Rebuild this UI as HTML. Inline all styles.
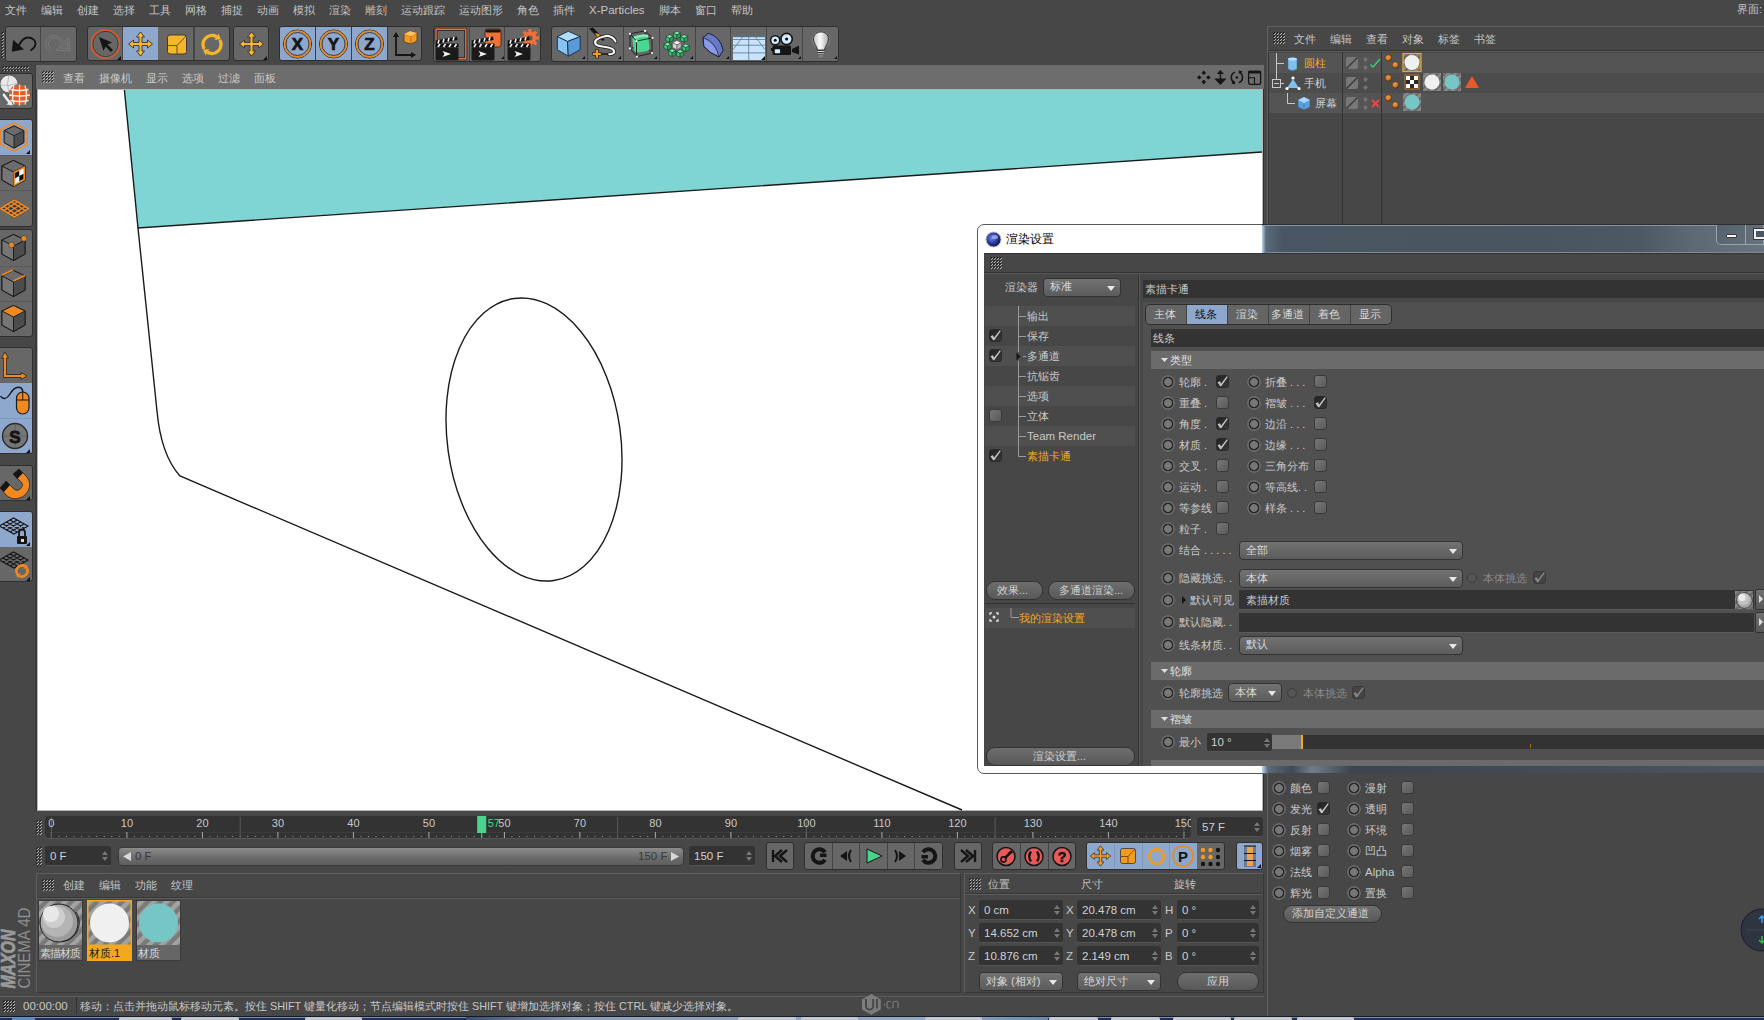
<!DOCTYPE html>
<html><head><meta charset="utf-8">
<style>
*{box-sizing:border-box;margin:0;padding:0}
html,body{width:1764px;height:1020px;overflow:hidden;background:#474747;font-family:"Liberation Sans",sans-serif;font-size:12px;color:#c4c4c4}
.a{position:absolute}
.t{position:absolute;white-space:nowrap;line-height:14px;font-size:11px}
.hatch{position:absolute;background:repeating-linear-gradient(135deg,#d0d0d0 0 1px,transparent 1px 3px);opacity:.55}
.grp{position:absolute;border:1px solid #2f2f2f;border-radius:3px;background:#676767;overflow:hidden}
.bt{position:absolute;top:0;bottom:0;border-right:1px solid #464646}
.sel{background:#8ea7cc}
.radio{position:absolute;width:14px;height:14px;border-radius:50%;background:radial-gradient(circle at 50% 50%,#787878 0,#747474 3.6px,#262626 4.1px,#262626 5px,#5c5c5c 5.4px,#6c6c6c 6px,#6c6c6c 6.6px,rgba(108,108,108,0) 7.1px)}
.cb{position:absolute;width:13px;height:13px;border-radius:3px;background:linear-gradient(135deg,#777,#5a5a5a);border:1px solid #3a3a3a}
.cbk{position:absolute;width:13px;height:13px;border-radius:3px;background:linear-gradient(135deg,#222,#383838);border:1px solid #2a2a2a}
.cbk:after{content:"";position:absolute;left:-1px;top:-1px;width:13px;height:13px;background:#c6c6c6;clip-path:polygon(1.5px 7.2px,4px 6.2px,5px 8.8px,10.8px 1.2px,11.8px 2px,5.2px 11.2px,4.2px 11.2px)}
.dd{position:absolute;border-radius:4px;background:linear-gradient(#727272,#5c5c5c);border:1px solid #333;color:#dcdcdc}
.dd:after{content:"";position:absolute;right:5px;top:50%;margin-top:-2px;border-left:4.5px solid transparent;border-right:4.5px solid transparent;border-top:5px solid #e8e8e8}
.fld{position:absolute;background:#333;border-radius:3px;border-bottom:1px solid #555}
.pbtn{position:absolute;border-radius:9px;background:linear-gradient(#6e6e6e,#585858);border:1px solid #333;color:#d0d0d0;text-align:center}
.dim:after{background:#8a8a8a}
</style></head><body>

<svg width="0" height="0" style="position:absolute"><defs><pattern id="hp" width="3" height="3" patternUnits="userSpaceOnUse"><rect x="0" y="1" width="1" height="1" fill="#1e1e1e"/><rect x="1" y="0" width="1" height="1" fill="#1e1e1e"/><rect x="1" y="2" width="1" height="1" fill="#b4b4b4"/><rect x="2" y="1" width="1" height="1" fill="#b4b4b4"/></pattern></defs></svg>
<!-- ============ MENU BAR ============ -->
<div id="menu">
<span class="t" style="left:5px;top:3px">文件</span>
<span class="t" style="left:41px;top:3px">编辑</span>
<span class="t" style="left:77px;top:3px">创建</span>
<span class="t" style="left:113px;top:3px">选择</span>
<span class="t" style="left:149px;top:3px">工具</span>
<span class="t" style="left:185px;top:3px">网格</span>
<span class="t" style="left:221px;top:3px">捕捉</span>
<span class="t" style="left:257px;top:3px">动画</span>
<span class="t" style="left:293px;top:3px">模拟</span>
<span class="t" style="left:329px;top:3px">渲染</span>
<span class="t" style="left:365px;top:3px">雕刻</span>
<span class="t" style="left:401px;top:3px">运动跟踪</span>
<span class="t" style="left:459px;top:3px">运动图形</span>
<span class="t" style="left:517px;top:3px">角色</span>
<span class="t" style="left:553px;top:3px">插件</span>
<span class="t" style="left:589px;top:3px;font-size:11.5px">X-Particles</span>
<span class="t" style="left:659px;top:3px">脚本</span>
<span class="t" style="left:695px;top:3px">窗口</span>
<span class="t" style="left:731px;top:3px">帮助</span>
<span class="t" style="left:1737px;top:2px">界面:</span>
</div>


<!-- ============ TOP TOOLBAR ============ -->
<svg class="a" style="left:1px;top:32px" width="3" height="26"><rect width="3" height="26" fill="url(#hp)"/></svg>
<div class="grp" style="left:5px;top:26px;width:72px;height:36px">
 <div class="bt" style="left:0;width:35px"></div>
 <svg class="a" style="left:0;top:0" width="70" height="34" viewBox="0 0 70 34">
  <path d="M7.2,12.7 L5.7,24.7 L18,22.5 Z" fill="#151515"/>
  <path d="M12.5,19 C15,14 18,10.5 22,10.5 C26.5,10.5 29.5,13.5 29.5,16.5 C29.5,19 27.5,21.5 24.5,23.5" fill="none" stroke="#151515" stroke-width="1.9"/>
  <g fill="none" stroke="#7c7c7c" stroke-width="0.9"><path d="M43,24 C39,20 38.5,14 43,10.5 C47,7.5 52,8.5 55,11.5 L57,14"/><path d="M45,22.5 C42,19 41.5,15 44.5,12.5 C47.5,10 51,10.5 53.5,13 L55,15"/><path d="M56.5,16 L63,11 L64,24 L50,23 Z"/><path d="M58,18 L61.5,15 L62,21.5 L54,21 Z"/></g>
 </svg>
</div>
<div class="grp" style="left:87px;top:26px;height:36px;width:143px;height:35px">
 <div class="bt sel" style="left:35px;width:35px;border:none"></div>
 <div class="bt" style="left:0;width:35px"></div>
 <div class="bt" style="left:106px;width:1px;left:106px"></div>
 <div class="bt" style="left:70px;width:36px"></div>
 <svg class="a" style="left:0;top:0" width="142" height="34" viewBox="0 0 142 34">
  <circle cx="17.5" cy="17" r="14" fill="none" stroke="#e0582a" stroke-width="1.7"/>
  <circle cx="17.5" cy="17" r="12.7" fill="none" stroke="#333" stroke-width="0.8"/>
  <path d="M11,10 L24,15.5 L19.5,17.5 L25,23 L23,25 L17.5,19.5 L15.5,24 Z" fill="#151515"/>
  <path d="M33,33 L33,29 L29,33 Z" fill="#111"/>
  <g transform="translate(52.5,17)"><path d="M0,-12 L4,-7 L1.5,-7 L1.5,-1.5 L7,-1.5 L7,-4 L12,0 L7,4 L7,1.5 L1.5,1.5 L1.5,7 L4,7 L0,12 L-4,7 L-1.5,7 L-1.5,1.5 L-7,1.5 L-7,4 L-12,0 L-7,-4 L-7,-1.5 L-1.5,-1.5 L-1.5,-7 L-4,-7 Z" fill="#f7b52c" stroke="#333" stroke-width="0.9" stroke-linejoin="round"/></g>
  <rect x="79.5" y="8" width="19" height="19" rx="2.5" fill="#f7b52c" stroke="#333" stroke-width="0.9"/>
  <path d="M80,18.5 L89,18.5 L89,27 M89,18.5 L98,9" fill="none" stroke="#5a4a20" stroke-width="0.9"/>
  <g stroke="#222" stroke-width="0"><path d="M116.21,22.00 A9,9 0 0 1 128.50,9.71" fill="none" stroke="#f7b52c" stroke-width="3.4"/><path d="M132.92,12.26 L130.37,6.47 L126.63,12.94 Z" fill="#f7b52c"/><path d="M131.79,13.00 A9,9 0 0 1 119.50,25.29" fill="none" stroke="#f7b52c" stroke-width="3.4"/><path d="M115.08,22.74 L117.63,28.53 L121.37,22.06 Z" fill="#f7b52c"/></g>
 </svg>
</div>
<div class="grp" style="left:233px;top:26px;height:36px;width:36px;height:35px">
 <svg class="a" style="left:0;top:0" width="35" height="34" viewBox="0 0 35 34">
  <g transform="translate(17.5,17)"><path d="M0,-12 L4,-7 L1.5,-7 L1.5,-1.5 L7,-1.5 L7,-4 L12,0 L7,4 L7,1.5 L1.5,1.5 L1.5,7 L4,7 L0,12 L-4,7 L-1.5,7 L-1.5,1.5 L-7,1.5 L-7,4 L-12,0 L-7,-4 L-7,-1.5 L-1.5,-1.5 L-1.5,-7 L-4,-7 Z" fill="#f7b52c" stroke="#333" stroke-width="0.9" stroke-linejoin="round"/></g>
  <path d="M33,33 L33,29 L29,33 Z" fill="#111"/>
 </svg>
</div>
<div class="grp" style="left:279px;top:26px;height:36px;width:143px;height:35px">
 <div class="bt sel" style="left:0;width:36px;border-right:1px solid #3e3e3e"></div>
 <div class="bt sel" style="left:36px;width:36px;border-right:1px solid #3e3e3e"></div>
 <div class="bt sel" style="left:72px;width:36px;border-right:1px solid #3e3e3e"></div>
 <svg class="a" style="left:0;top:0" width="142" height="34" viewBox="0 0 142 34">
  <g><circle cx="17.5" cy="17" r="14" fill="none" stroke="#222" stroke-width="1"/><circle cx="17.5" cy="17" r="12.8" fill="none" stroke="#e88a20" stroke-width="1.8"/><circle cx="17.5" cy="17" r="11.5" fill="none" stroke="#222" stroke-width="0.8"/><circle cx="53.5" cy="17" r="14" fill="none" stroke="#222" stroke-width="1"/><circle cx="53.5" cy="17" r="12.8" fill="none" stroke="#e88a20" stroke-width="1.8"/><circle cx="53.5" cy="17" r="11.5" fill="none" stroke="#222" stroke-width="0.8"/><circle cx="89.5" cy="17" r="14" fill="none" stroke="#222" stroke-width="1"/><circle cx="89.5" cy="17" r="12.8" fill="none" stroke="#e88a20" stroke-width="1.8"/><circle cx="89.5" cy="17" r="11.5" fill="none" stroke="#222" stroke-width="0.8"/></g>
  <g fill="#151515" stroke="#151515" stroke-width="0.7" font-family="Liberation Sans" font-weight="bold" font-size="17" text-anchor="middle"><text x="17.5" y="23.4">X</text><text x="53.5" y="23.4">Y</text><text x="89.5" y="23.4">Z</text></g>
  <path d="M116,6 L116,28 L134,28" fill="none" stroke="#151515" stroke-width="1.8"/>
  <path d="M113,10 L116,5 L119,10 Z M131,25 L136,28 L131,31 Z" fill="#151515"/>
  <path d="M124,7 L130,4 L137,6 L137,14 L131,17 L124,15 Z" fill="#f39a1f" stroke="#333" stroke-width="0.7"/>
  <path d="M124,7 L131,9.5 L137,6 M131,9.5 L131,17" fill="none" stroke="#a85a10" stroke-width="0.7"/>
  <path d="M124,7 L130,4 L137,6 L131,9.5 Z" fill="#ffc060"/>
 </svg>
</div>


<div class="grp" style="left:433px;top:26px;width:108px;height:36px">
 <div class="bt" style="left:0;width:36px"></div><div class="bt" style="left:36px;width:35px"></div>
 <svg class="a" style="left:0;top:0" width="107" height="34" viewBox="0 0 107 34">
  <path d="M2,17 V2.2 H31.8 V31.8 H24" fill="none" stroke="#222" stroke-width="3"/><path d="M2,17 V2.2 H31.8 V31.8 H24" fill="none" stroke="#f07038" stroke-width="1.4"/>
  <g transform="translate(0,0)">
  <rect x="1.5" y="20.5" width="23" height="13" rx="1.5" fill="#1a1a1a"/>
  <rect x="1.5" y="16.5" width="23" height="4" fill="#111"/>
  <path d="M4,20 L6,17 M9.5,20 L11.5,17 M15,20 L17,17 M20.5,20 L22.5,17" stroke="#f0f0f0" stroke-width="1.6"/>
  <path d="M1.5,13.5 L23,9.5 L23.5,13 L2,17 Z" fill="#111"/>
  <path d="M4,16.5 L5,13 M9,15.5 L10,12 M14,14.5 L15,11 M19,13.5 L20,10" stroke="#f0f0f0" stroke-width="1.6"/>
  <path d="M8.5,24 L17,27 L8.5,30 L10.5,27 Z" fill="#f4f4f4"/>
 </g>
  <rect x="51" y="2" width="16" height="18" rx="2.5" fill="#f07038" stroke="#222" stroke-width="0.8"/><rect x="51.5" y="2.5" width="15" height="3" rx="1.5" fill="#151515"/>
  <g transform="translate(36,0)">
  <rect x="1.5" y="20.5" width="23" height="13" rx="1.5" fill="#1a1a1a"/>
  <rect x="1.5" y="16.5" width="23" height="4" fill="#111"/>
  <path d="M4,20 L6,17 M9.5,20 L11.5,17 M15,20 L17,17 M20.5,20 L22.5,17" stroke="#f0f0f0" stroke-width="1.6"/>
  <path d="M1.5,13.5 L23,9.5 L23.5,13 L2,17 Z" fill="#111"/>
  <path d="M4,16.5 L5,13 M9,15.5 L10,12 M14,14.5 L15,11 M19,13.5 L20,10" stroke="#f0f0f0" stroke-width="1.6"/>
  <path d="M8.5,24 L17,27 L8.5,30 L10.5,27 Z" fill="#f4f4f4"/>
 </g>
  <path d="M67,32 L70,29 L70,32 Z" fill="#111"/>
  <g transform="translate(96,11)"><circle r="6.5" fill="#f07038"/><rect x="-1.6" y="-9" width="3.2" height="4" fill="#f07038" transform="rotate(0)"/><rect x="-1.6" y="-9" width="3.2" height="4" fill="#f07038" transform="rotate(45)"/><rect x="-1.6" y="-9" width="3.2" height="4" fill="#f07038" transform="rotate(90)"/><rect x="-1.6" y="-9" width="3.2" height="4" fill="#f07038" transform="rotate(135)"/><rect x="-1.6" y="-9" width="3.2" height="4" fill="#f07038" transform="rotate(180)"/><rect x="-1.6" y="-9" width="3.2" height="4" fill="#f07038" transform="rotate(225)"/><rect x="-1.6" y="-9" width="3.2" height="4" fill="#f07038" transform="rotate(270)"/><rect x="-1.6" y="-9" width="3.2" height="4" fill="#f07038" transform="rotate(315)"/><circle r="2.6" fill="#5a5a5a"/></g>
  <g transform="translate(72,0)">
  <rect x="1.5" y="20.5" width="23" height="13" rx="1.5" fill="#1a1a1a"/>
  <rect x="1.5" y="16.5" width="23" height="4" fill="#111"/>
  <path d="M4,20 L6,17 M9.5,20 L11.5,17 M15,20 L17,17 M20.5,20 L22.5,17" stroke="#f0f0f0" stroke-width="1.6"/>
  <path d="M1.5,13.5 L23,9.5 L23.5,13 L2,17 Z" fill="#111"/>
  <path d="M4,16.5 L5,13 M9,15.5 L10,12 M14,14.5 L15,11 M19,13.5 L20,10" stroke="#f0f0f0" stroke-width="1.6"/>
  <path d="M8.5,24 L17,27 L8.5,30 L10.5,27 Z" fill="#f4f4f4"/>
 </g>
 </svg>
</div>
<div class="grp" style="left:551px;top:26px;width:288px;height:36px">
 <div class="bt" style="left:0;width:36px"></div><div class="bt" style="left:36px;width:36px"></div><div class="bt" style="left:72px;width:36px"></div><div class="bt" style="left:108px;width:36px"></div><div class="bt" style="left:144px;width:35px"></div><div class="bt" style="left:179px;width:36px"></div><div class="bt" style="left:215px;width:36px"></div>
 <svg class="a" style="left:0;top:0" width="287" height="34" viewBox="0 0 287 34">
  <path d="M33,32 L33,29 L30,32 Z M69,32 L69,29 L66,32 Z M105,32 L105,29 L102,32 Z M141,32 L141,29 L138,32 Z M177,32 L177,29 L174,32 Z M212,32 L212,29 L209,32 Z M249,32 L249,29 L246,32 Z M285,32 L285,29 L282,32 Z" fill="#111"/>
  <g stroke="#1a2a3a" stroke-width="0.9" stroke-linejoin="round"><polygon points="16.3,4.3 28.2,9.6 15.5,14.5 5.3,9.6" fill="#aee0ff"/><polygon points="5.3,9.6 15.5,14.5 16.3,29.2 5.3,22.7" fill="#86c4f4"/><polygon points="15.5,14.5 28.2,9.6 28.2,22.7 16.3,29.2" fill="#5a9ad8"/></g>
  <path d="M37,1.5 L41,0.5 L52.5,12.5 L51,14 Z" fill="#151515"/><path d="M37,1.5 L40,4 L51,14 L44,9 Z" fill="#151515"/><path d="M43,6 L47,7 L49,11.5 L45,9.5 Z" fill="#f39a1f"/>
  <path d="M63.5,14.5 C62,10 56,8 52,9.5 C46,11 41,13.5 44,17.5 C47,20.5 57,19 61,22.5 C63.5,25 61.5,27.5 57,27.2" fill="none" stroke="#151515" stroke-width="3.6" stroke-linecap="round"/>
  <path d="M63.5,14.5 C62,10 56,8 52,9.5 C46,11 41,13.5 44,17.5 C47,20.5 57,19 61,22.5 C63.5,25 61.5,27.5 57,27.2" fill="none" stroke="#f4f4f4" stroke-width="2.2" stroke-linecap="round"/>
  <path d="M47,27 H56.5" stroke="#151515" stroke-width="1.6"/>
  <path d="M44.9,22.3 V31.3 M40.4,26.8 H49.4" stroke="#151515" stroke-width="3.6"/><path d="M44.9,22.8 V30.8 M40.9,26.8 H48.9" stroke="#f39a1f" stroke-width="2.2"/>
  <g stroke="#1a1a1a" stroke-width="0.9" fill="none"><path d="M78,6.8 L93,3.9 L100.4,10.8 L84.5,14.1 Z M78,6.8 V21.4 L84.9,29.6 L100,26 V10.8 M84.5,14.1 L84.9,29.6 M78,21.4 L93,18.5 L100,26 M93,3.9 V18.5"/></g>
  <rect x="81" y="8" width="16" height="17" rx="4" fill="#48d890" transform="rotate(-8 89 16.5)"/><path d="M82,11 Q89,7.5 96,9" fill="none" stroke="#8ff0c0" stroke-width="2"/>
  <path d="M78,6.8 L84.5,14.1 L100.4,10.8 M84.5,14.1 V29.6" stroke="#1a1a1a" stroke-width="0.9" fill="none"/>
  <g fill="#fff"><circle cx="78" cy="6.8" r="1.1"/><circle cx="93" cy="3.9" r="1.1"/><circle cx="100.4" cy="10.8" r="1.1"/><circle cx="84.5" cy="14.1" r="1.1"/><circle cx="78" cy="21.4" r="1.1"/><circle cx="84.9" cy="29.6" r="1.1"/><circle cx="100" cy="26" r="1.1"/></g>
  <polygon points="124.90,4.25 128.46,6.12 124.90,8.00 121.34,6.12" fill="#7af0a8" stroke="#1a3a2a" stroke-width="0.6"/><polygon points="121.34,6.12 124.90,8.00 124.90,11.94 121.34,10.06" fill="#3cc878" stroke="#1a3a2a" stroke-width="0.6"/><polygon points="128.46,6.12 124.90,8.00 124.90,11.94 128.46,10.06" fill="#2aa860" stroke="#1a3a2a" stroke-width="0.6"/><polygon points="132.18,7.64 135.74,9.52 132.18,11.39 128.61,9.52" fill="#7af0a8" stroke="#1a3a2a" stroke-width="0.6"/><polygon points="128.61,9.52 132.18,11.39 132.18,15.33 128.61,13.46" fill="#3cc878" stroke="#1a3a2a" stroke-width="0.6"/><polygon points="135.74,9.52 132.18,11.39 132.18,15.33 135.74,13.46" fill="#2aa860" stroke="#1a3a2a" stroke-width="0.6"/><polygon points="133.83,17.00 137.39,18.87 133.83,20.75 130.26,18.87" fill="#7af0a8" stroke="#1a3a2a" stroke-width="0.6"/><polygon points="130.26,18.87 133.83,20.75 133.83,24.69 130.26,22.81" fill="#3cc878" stroke="#1a3a2a" stroke-width="0.6"/><polygon points="137.39,18.87 133.83,20.75 133.83,24.69 137.39,22.81" fill="#2aa860" stroke="#1a3a2a" stroke-width="0.6"/><polygon points="128.15,22.68 131.71,24.55 128.15,26.43 124.59,24.55" fill="#7af0a8" stroke="#1a3a2a" stroke-width="0.6"/><polygon points="124.59,24.55 128.15,26.43 128.15,30.36 124.59,28.49" fill="#3cc878" stroke="#1a3a2a" stroke-width="0.6"/><polygon points="131.71,24.55 128.15,26.43 128.15,30.36 131.71,28.49" fill="#2aa860" stroke="#1a3a2a" stroke-width="0.6"/><polygon points="120.15,21.98 123.71,23.85 120.15,25.73 116.59,23.85" fill="#7af0a8" stroke="#1a3a2a" stroke-width="0.6"/><polygon points="116.59,23.85 120.15,25.73 120.15,29.66 116.59,27.79" fill="#3cc878" stroke="#1a3a2a" stroke-width="0.6"/><polygon points="123.71,23.85 120.15,25.73 120.15,29.66 123.71,27.79" fill="#2aa860" stroke="#1a3a2a" stroke-width="0.6"/><polygon points="115.54,15.40 119.11,17.27 115.54,19.15 111.98,17.27" fill="#7af0a8" stroke="#1a3a2a" stroke-width="0.6"/><polygon points="111.98,17.27 115.54,19.15 115.54,23.09 111.98,21.21" fill="#3cc878" stroke="#1a3a2a" stroke-width="0.6"/><polygon points="119.11,17.27 115.54,19.15 115.54,23.09 119.11,21.21" fill="#2aa860" stroke="#1a3a2a" stroke-width="0.6"/><polygon points="117.62,7.64 121.19,9.52 117.62,11.39 114.06,9.52" fill="#7af0a8" stroke="#1a3a2a" stroke-width="0.6"/><polygon points="114.06,9.52 117.62,11.39 117.62,15.33 114.06,13.46" fill="#3cc878" stroke="#1a3a2a" stroke-width="0.6"/><polygon points="121.19,9.52 117.62,11.39 117.62,15.33 121.19,13.46" fill="#2aa860" stroke="#1a3a2a" stroke-width="0.6"/><polygon points="124.90,13.50 129.18,15.75 124.90,18.00 120.62,15.75" fill="#f4f4f4" stroke="#555" stroke-width="0.6"/><polygon points="120.62,15.75 124.90,18.00 124.90,22.73 120.62,20.48" fill="#d8d8d8" stroke="#555" stroke-width="0.6"/><polygon points="129.18,15.75 124.90,18.00 124.90,22.73 129.18,20.48" fill="#b8b8b8" stroke="#555" stroke-width="0.6"/>
  <path d="M151,10.5 L156.7,6.3 Q168.5,10 171,23.5 L167,30 Q158,26.5 151.8,19.5 Z" fill="#8a9ae8" stroke="#1e2440" stroke-width="0.9" stroke-linejoin="round"/>
  <path d="M156.7,6.3 Q168.5,10 171,23.5 L167,30 Q164,17 151,10.5 Z" fill="#6a78c8"/><path d="M151,10.5 Q164,15 167,30" fill="none" stroke="#1e2440" stroke-width="0.8"/>
  <path d="M151,10.5 L156.7,6.3 Q168.5,10 171,23.5 L167,30 Q158,26.5 151.8,19.5 Z" fill="none" stroke="#1e2440" stroke-width="0.9" stroke-linejoin="round"/>
  <rect x="181" y="8" width="32" height="25" fill="#c8e4fc"/><rect x="181" y="8" width="32" height="2.2" fill="#5a6e82"/>
  <g stroke="#6a8098" stroke-width="0.9" fill="none"><path d="M181,18.2 H213 M181,25.9 H213 M181,12.5 H213 M196.7,10 V33 M190.5,10 L181,22.7 M203.6,10 L213,22.7"/></g>
  <path d="M213,33 L213,29 L209,33 Z" fill="#111"/>
  <g><circle cx="223.2" cy="13.3" r="4.6" fill="#d4ecff" stroke="#151515" stroke-width="1.6"/><circle cx="223.2" cy="13.3" r="1.5" fill="#151515"/><circle cx="234.6" cy="12" r="5.6" fill="#d4ecff" stroke="#151515" stroke-width="1.6"/><circle cx="234.6" cy="12" r="1.6" fill="#151515"/>
  <rect x="220.5" y="18.6" width="18.5" height="9.5" rx="1.5" fill="#151515"/><rect x="219" y="21" width="2.5" height="3" fill="#151515"/><path d="M240,22 L247,18.6 L247,27.6 L240,25 Z" fill="#151515"/><rect x="222.8" y="22.3" width="5.3" height="4" rx="0.8" fill="#d4ecff"/></g>
  <defs><radialGradient id="glow"><stop offset="0" stop-color="#fff" stop-opacity=".9"/><stop offset="0.6" stop-color="#fff" stop-opacity=".35"/><stop offset="1" stop-color="#fff" stop-opacity="0"/></radialGradient><linearGradient id="bulb" x1="0" x2="1"><stop offset="0" stop-color="#c8c8c8"/><stop offset="0.45" stop-color="#fafafa"/><stop offset="1" stop-color="#a8a8a8"/></linearGradient></defs>
  <circle cx="269" cy="13" r="10" fill="url(#glow)"/>
  <path d="M265.5,23 C265,19 261.5,16.5 261.5,12 C261.5,7.5 265,5 269,5 C273,5 276.5,7.5 276.5,12 C276.5,16.5 273,19 272.5,23 Z" fill="url(#bulb)" stroke="#2a2a2a" stroke-width="0.9"/>
  <path d="M265.5,24.5 H272.5 M265.8,26.8 H272.2 M266.5,29 H271.5" stroke="#2a2a2a" stroke-width="2"/><path d="M265.5,24.5 H272.5 M265.8,26.8 H272.2 M266.5,29 H271.5" stroke="#d8d8d8" stroke-width="1"/>
 </svg>
</div>


<!-- ============ LEFT TOOLBAR ============ -->
<div class="a" style="left:35px;top:65px;width:2px;height:747px;background:#3a3a3a"></div>
<svg class="a" style="left:2px;top:66px" width="27" height="5"><rect width="27" height="5" fill="url(#hp)"/></svg>
<div class="grp" style="left:-4px;top:73px;width:37px;height:36px">
 <svg class="a" style="left:3px;top:0" width="33" height="35" viewBox="0 0 33 35">
  <circle cx="9" cy="10" r="9" fill="#e8e8e8" stroke="#444" stroke-width="0.7"/><path d="M0.5,11 Q9,13 17.5,9 M9,1 Q6,10 9,19" fill="none" stroke="#aaa" stroke-width="0.7"/>
  <path d="M2,21 L8,29 L5,30.5 L13,32 L12,24 L9.5,26 L4,18.5 Z" fill="#eee" stroke="#555" stroke-width="0.6"/>
  <circle cx="19.5" cy="21" r="10.5" fill="#e85a20" stroke="#222" stroke-width="0.9"/>
  <path d="M9,21 Q19.5,23 30,21" fill="none" stroke="#f0f0f0" stroke-width="1.6"/>
  <path d="M10.5,15.5 Q19.5,17.5 28.5,15.5 M10.5,26.5 Q19.5,28.5 28.5,26.5" fill="none" stroke="#eee" stroke-width="1.3"/>
  <path d="M19.5,10.5 V31.5 M14,11.5 Q11,21 14,30.5 M25,11.5 Q28,21 25,30.5" fill="none" stroke="#eee" stroke-width="1.3"/>
  <path d="M9.5,18 A10.5,10.5 0 0 1 29.5,18 L29.5,24 A10.5,10.5 0 0 1 9.5,24 Z" fill="none" stroke="#ccc" stroke-width="0.5"/>
 </svg>
</div>
<div class="grp" style="left:-4px;top:119px;width:37px;height:108px">
 <div class="bt sel" style="left:0;right:0;top:0;height:35px;border:none"></div>
 <div class="a" style="left:0;right:0;top:70px;height:1px;background:#5a5a5a"></div>
 <div class="a" style="left:0;right:0;top:35px;height:1px;background:#5a5a5a"></div>
 <svg class="a" style="left:2px;top:0" width="33" height="107" viewBox="0 0 33 107">
  <path d="M2,9.5 L15,3 L28,9.5 L28,24.5 L15,31 L2,24.5 Z" fill="none" stroke="#f08a20" stroke-width="1.8" stroke-linejoin="round"/>
  <g transform="translate(15,17) scale(0.85) translate(-14.5,-17.5)"><path d="M3,10 L14.5,4.5 L26,10 L26,24 L14.5,30.5 L3,24 Z" fill="#5a5a5a" stroke="#1e1e1e" stroke-width="1.2" stroke-linejoin="round"/><path d="M3,10 L14.5,16 L14.5,30.5 L3,24 Z" fill="#767676"/><path d="M14.5,16 L26,10 L26,24 L14.5,30.5 Z" fill="#4c4c4c"/><path d="M3,10 L14.5,4.5 L26,10 L14.5,16 Z" fill="#6c6c6c"/><path d="M3,10 L14.5,4.5 L26,10 L26,24 L14.5,30.5 L3,24 Z M3,10 L14.5,16 L26,10 M14.5,16 V30.5" fill="none" stroke="#1e1e1e" stroke-width="1" stroke-linejoin="round"/></g>
  <path d="M31,34 L31,30 L27,34 Z" fill="#111"/>
  <g transform="translate(0,36)"><path d="M3,10 L14.5,4.5 L26,10 L26,24 L14.5,30.5 L3,24 Z" fill="#5a5a5a" stroke="#1e1e1e" stroke-width="1.2" stroke-linejoin="round"/><path d="M3,10 L14.5,16 L14.5,30.5 L3,24 Z" fill="#767676"/><path d="M14.5,16 L26,10 L26,24 L14.5,30.5 Z" fill="#4c4c4c"/><path d="M3,10 L14.5,4.5 L26,10 L14.5,16 Z" fill="#6c6c6c"/><path d="M3,10 L14.5,4.5 L26,10 L26,24 L14.5,30.5 L3,24 Z M3,10 L14.5,16 L26,10 M14.5,16 V30.5" fill="none" stroke="#1e1e1e" stroke-width="1" stroke-linejoin="round"/><path d="M14.5,16 L26,10 L26,24 L14.5,30.5 Z" fill="#f08a20"/><path d="M16,17 L24.5,12.5 L24.5,23 L16,28 Z" fill="#fff"/><g fill="#111"><path d="M16,17 L20.25,14.75 L20.25,20 L16,22.5 Z M20.25,20 L24.5,17.75 L24.5,23 L20.25,25.25 Z"/></g></g>
  <g transform="translate(0,71)"><path d="M0.5,17.5 L15.5,8 L30.5,17.5 L15.5,27 Z" fill="#3a3a3a" stroke="#222" stroke-width="0.6"/><g stroke="#f08a20" stroke-width="1.3"><path d="M4.25,15.1 L19.25,24.6 M8,12.75 L23,22.25 M11.75,10.4 L26.75,19.9 M4.25,19.9 L19.25,10.4 M8,22.25 L23,12.75 M11.75,24.6 L26.75,15.1"/></g><path d="M1.5,17.5 L15.5,9 L29.5,17.5 L15.5,26 Z" fill="none" stroke="#f08a20" stroke-width="1.6"/></g>
 </svg>
</div>
<div class="grp" style="left:-4px;top:229px;width:37px;height:108px">
 <div class="a" style="left:0;right:0;top:36px;height:1px;background:#5a5a5a"></div>
 <div class="a" style="left:0;right:0;top:71px;height:1px;background:#5a5a5a"></div>
 <svg class="a" style="left:2px;top:0" width="33" height="107" viewBox="0 0 33 107">
  <g><path d="M3,10 L14.5,4.5 L26,10 L26,24 L14.5,30.5 L3,24 Z" fill="#5a5a5a" stroke="#1e1e1e" stroke-width="1.2" stroke-linejoin="round"/><path d="M3,10 L14.5,16 L14.5,30.5 L3,24 Z" fill="#767676"/><path d="M14.5,16 L26,10 L26,24 L14.5,30.5 Z" fill="#4c4c4c"/><path d="M3,10 L14.5,4.5 L26,10 L14.5,16 Z" fill="#6c6c6c"/><path d="M3,10 L14.5,4.5 L26,10 L26,24 L14.5,30.5 L3,24 Z M3,10 L14.5,16 L26,10 M14.5,16 V30.5" fill="none" stroke="#1e1e1e" stroke-width="1" stroke-linejoin="round"/><circle cx="12.5" cy="15" r="2.8" fill="#f08a20" stroke="#333" stroke-width="0.5"/><circle cx="25" cy="8.5" r="2.8" fill="#f08a20" stroke="#333" stroke-width="0.5"/></g>
  <g transform="translate(0,36)"><path d="M3,10 L14.5,4.5 L26,10 L26,24 L14.5,30.5 L3,24 Z" fill="#5a5a5a" stroke="#1e1e1e" stroke-width="1.2" stroke-linejoin="round"/><path d="M3,10 L14.5,16 L14.5,30.5 L3,24 Z" fill="#767676"/><path d="M14.5,16 L26,10 L26,24 L14.5,30.5 Z" fill="#4c4c4c"/><path d="M3,10 L14.5,4.5 L26,10 L14.5,16 Z" fill="#6c6c6c"/><path d="M3,10 L14.5,4.5 L26,10 L26,24 L14.5,30.5 L3,24 Z M3,10 L14.5,16 L26,10 M14.5,16 V30.5" fill="none" stroke="#1e1e1e" stroke-width="1" stroke-linejoin="round"/><path d="M3,9 L14,4 M14.5,15 L26,9.5" stroke="#f08a20" stroke-width="1.8"/></g>
  <g transform="translate(0,71)"><path d="M3,10 L14.5,4.5 L26,10 L26,24 L14.5,30.5 L3,24 Z" fill="#5a5a5a" stroke="#1e1e1e" stroke-width="1.2" stroke-linejoin="round"/><path d="M3,10 L14.5,16 L14.5,30.5 L3,24 Z" fill="#767676"/><path d="M14.5,16 L26,10 L26,24 L14.5,30.5 Z" fill="#4c4c4c"/><path d="M3,10 L14.5,4.5 L26,10 L14.5,16 Z" fill="#f08a20"/><path d="M3,10 L14.5,4.5 L26,10 L26,24 L14.5,30.5 L3,24 Z M3,10 L14.5,16 L26,10 M14.5,16 V30.5" fill="none" stroke="#1e1e1e" stroke-width="1" stroke-linejoin="round"/></g>
 </svg>
</div>
<div class="grp" style="left:-4px;top:347px;width:37px;height:107px">
 <div class="bt sel" style="left:0;right:0;top:35px;height:71px;border:none"></div>
 <div class="a" style="left:0;right:0;top:70px;height:1px;background:#7f97bb"></div>
 <svg class="a" style="left:2px;top:0" width="33" height="106" viewBox="0 0 33 106">
  <path d="M6,8 V28 H24" fill="none" stroke="#222" stroke-width="3.6"/><path d="M2.5,10 L6,4 L9.5,10 Z M22,24.5 L28,28 L22,31.5 Z" fill="#f08a20" stroke="#222" stroke-width="0.8"/><path d="M6,8 V28 H24" fill="none" stroke="#f08a20" stroke-width="2.2"/>
  <g transform="translate(0,35)"><path d="M1.5,13 C4,17 8,16 11,11 C14,6 18,3.5 21,4.5 C23,5.2 23.8,7 23.8,9.5" fill="none" stroke="#151515" stroke-width="1.4"/><rect x="17.5" y="9" width="12.5" height="22" rx="6.2" fill="#f08a20" stroke="#1a1a1a" stroke-width="1.2"/><path d="M17.5,17 H30 M23.75,9 V17" stroke="#1a1a1a" stroke-width="1"/></g>
  <g transform="translate(0,71)"><circle cx="16" cy="17" r="12.5" fill="#767676" stroke="#2a2a2a" stroke-width="1.4"/><path d="M4,17.5 Q16,15.5 28,17.5 M16.5,5 Q15,17 16.5,29" fill="none" stroke="#5a5a5a" stroke-width="0.7"/><text x="16" y="23.5" font-family="Liberation Sans" font-weight="bold" font-size="17" text-anchor="middle" fill="#151515" stroke="#151515" stroke-width="0.9">S</text><path d="M31,34 L31,30 L27,34 Z" fill="#111"/></g>
 </svg>
</div>
<div class="grp" style="left:-4px;top:465px;width:37px;height:36px">
 <svg class="a" style="left:2px;top:0" width="33" height="35" viewBox="0 0 33 35">
  <path d="M6,12 L13,19 C15,22 19,22 21,19 C23,17 23,14 20,12 L13,5 L19,0 L26,7 C31,12 31,20 25,26 C19,31 11,31 6,26 L0,19 Z" fill="#f08a20" stroke="#222" stroke-width="0.8" transform="translate(1,3)"/>
  <path d="M1,22 L7,15 L11,19 L5,26 Z M14,8 L20,3 L24,7 L18,13 Z" fill="#151515"/>
  <path d="M31,34 L31,30 L27,34 Z" fill="#111"/>
 </svg>
</div>
<div class="grp" style="left:-4px;top:511px;width:37px;height:71px">
 <div class="bt sel" style="left:0;right:0;top:0;height:35px;border:none"></div>
 <svg class="a" style="left:2px;top:0" width="33" height="70" viewBox="0 0 33 70"><g transform="translate(0,1)" stroke="#151515" stroke-width="1.1" fill="none"><path d="M0.5,13 L14.5,5 L29,13 L15,21 Z"/><path d="M4,11 L18,19 M7.5,9 L21.5,17 M11,7 L25,15 M4,15 L18,7 M7.5,17 L21.5,9 M11,19 L25,11"/></g><rect x="18" y="24" width="10" height="8" rx="1" fill="#151515"/><path d="M20,24 V20.5 A3,3 0 0 1 26,20.5 V24" fill="none" stroke="#151515" stroke-width="1.8"/><rect x="22" y="27" width="3" height="3" fill="#ddd"/><path d="M31,34 L31,30 L27,34 Z" fill="#111"/><g transform="translate(0,35)" stroke="#151515" stroke-width="1.1" fill="none"><path d="M0.5,13 L14.5,5 L29,13 L15,21 Z"/><path d="M4,11 L18,19 M7.5,9 L21.5,17 M11,7 L25,15 M4,15 L18,7 M7.5,17 L21.5,9 M11,19 L25,11"/></g><path d="M18.24,61.75 A5.5,5.5 0 0 1 25.75,54.24" fill="none" stroke="#f08a20" stroke-width="2.6"/><path d="M29.13,56.19 L27.18,51.76 L24.32,56.71 Z" fill="#f08a20"/><path d="M27.76,56.25 A5.5,5.5 0 0 1 20.25,63.76" fill="none" stroke="#f08a20" stroke-width="2.6"/><path d="M16.87,61.81 L18.82,66.24 L21.68,61.29 Z" fill="#f08a20"/><path d="M31,69 L31,65 L27,69 Z" fill="#111"/></svg>
</div>

<!-- ============ VIEWPORT ============ -->
<div class="a" style="left:36px;top:65px;width:1228px;height:24px;background:#6d6d6d"></div>
<svg class="a" style="left:42px;top:71px" width="12" height="12"><rect width="12" height="12" fill="url(#hp)"/></svg>
<span class="t" style="left:63px;top:71px;color:#cacaca">查看</span>
<span class="t" style="left:99px;top:71px;color:#cacaca">摄像机</span>
<span class="t" style="left:146px;top:71px;color:#cacaca">显示</span>
<span class="t" style="left:182px;top:71px;color:#cacaca">选项</span>
<span class="t" style="left:218px;top:71px;color:#cacaca">过滤</span>
<span class="t" style="left:254px;top:71px;color:#cacaca">面板</span>
<svg class="a" style="left:37px;top:89px" width="1227" height="723" viewBox="37 89 1227 723">
<rect x="37" y="89" width="1226" height="722" fill="#b4b4b4"/><rect x="38" y="90" width="1224" height="720" fill="#fff"/>
<polygon points="124.2,90 1262,90 1262,152 138,228" fill="#7fd5d4"/>
<rect x="1263" y="89" width="1" height="722" fill="#2e2e2e"/><rect x="37" y="811" width="1226" height="1" fill="#2e2e2e"/>
<path d="M124.4,90 L138,228 L1262,152" fill="none" stroke="#1a1a1a" stroke-width="1.4"/>
<path d="M138,228 L157,411 Q161,455 180,476 L962,810" fill="none" stroke="#1a1a1a" stroke-width="1.4"/>
<ellipse cx="534" cy="439.5" rx="86.6" ry="142.4" transform="rotate(-8 534 439.5)" fill="none" stroke="#1a1a1a" stroke-width="1.4"/>
</svg>

<!-- ============ TIMELINE ============ -->
<div class="a" style="left:0;top:811px;width:1264px;height:184px;background:#474747"></div>
<div class="a" style="left:0;top:65px;width:36px;height:930px;background:#474747;z-index:-1"></div>
<svg class="a" style="left:36px;top:820px" width="6" height="15"><rect width="6" height="15" fill="url(#hp)"/></svg>
<div class="a" style="left:45px;top:816px;width:146px;height:22px;background:#333;border-radius:4px;width:1146px;box-shadow:0 1px 0 #555"></div>
<div class="a" style="left:46px;top:832px;width:1144px;height:1px;background:#3b3b3b"></div>
<svg class="a" style="left:45px;top:816px" width="1146" height="22" viewBox="45 816 1146 22">
<rect x="50.9" y="832" width="1" height="6" fill="#aaa"/>
<rect x="126.4" y="832" width="1" height="6" fill="#aaa"/>
<rect x="201.9" y="832" width="1" height="6" fill="#aaa"/>
<rect x="277.4" y="832" width="1" height="6" fill="#aaa"/>
<rect x="352.9" y="832" width="1" height="6" fill="#aaa"/>
<rect x="428.4" y="832" width="1" height="6" fill="#aaa"/>
<rect x="503.9" y="832" width="1" height="6" fill="#aaa"/>
<rect x="579.4" y="832" width="1" height="6" fill="#aaa"/>
<rect x="654.9" y="832" width="1" height="6" fill="#aaa"/>
<rect x="730.4" y="832" width="1" height="6" fill="#aaa"/>
<rect x="805.9" y="832" width="1" height="6" fill="#aaa"/>
<rect x="881.4" y="832" width="1" height="6" fill="#aaa"/>
<rect x="956.9" y="832" width="1" height="6" fill="#aaa"/>
<rect x="1032.4" y="832" width="1" height="6" fill="#aaa"/>
<rect x="1107.9" y="832" width="1" height="6" fill="#aaa"/>
<rect x="1183.4" y="832" width="1" height="6" fill="#aaa"/>
<rect x="58.4" y="836" width="1" height="1" fill="#999"/>
<rect x="66.0" y="836" width="1" height="1" fill="#999"/>
<rect x="73.5" y="836" width="1" height="1" fill="#999"/>
<rect x="81.1" y="836" width="1" height="1" fill="#999"/>
<rect x="88.7" y="836" width="1" height="1" fill="#999"/>
<rect x="96.2" y="836" width="1" height="1" fill="#999"/>
<rect x="103.8" y="836" width="1" height="1" fill="#999"/>
<rect x="111.3" y="836" width="1" height="1" fill="#999"/>
<rect x="118.8" y="836" width="1" height="1" fill="#999"/>
<rect x="133.9" y="836" width="1" height="1" fill="#999"/>
<rect x="141.5" y="836" width="1" height="1" fill="#999"/>
<rect x="149.0" y="836" width="1" height="1" fill="#999"/>
<rect x="156.6" y="836" width="1" height="1" fill="#999"/>
<rect x="164.2" y="836" width="1" height="1" fill="#999"/>
<rect x="171.7" y="836" width="1" height="1" fill="#999"/>
<rect x="179.2" y="836" width="1" height="1" fill="#999"/>
<rect x="186.8" y="836" width="1" height="1" fill="#999"/>
<rect x="194.3" y="836" width="1" height="1" fill="#999"/>
<rect x="209.4" y="836" width="1" height="1" fill="#999"/>
<rect x="217.0" y="836" width="1" height="1" fill="#999"/>
<rect x="224.6" y="836" width="1" height="1" fill="#999"/>
<rect x="232.1" y="836" width="1" height="1" fill="#999"/>
<rect x="239.7" y="836" width="1" height="1" fill="#999"/>
<rect x="247.2" y="836" width="1" height="1" fill="#999"/>
<rect x="254.8" y="836" width="1" height="1" fill="#999"/>
<rect x="262.3" y="836" width="1" height="1" fill="#999"/>
<rect x="269.8" y="836" width="1" height="1" fill="#999"/>
<rect x="284.9" y="836" width="1" height="1" fill="#999"/>
<rect x="292.5" y="836" width="1" height="1" fill="#999"/>
<rect x="300.1" y="836" width="1" height="1" fill="#999"/>
<rect x="307.6" y="836" width="1" height="1" fill="#999"/>
<rect x="315.1" y="836" width="1" height="1" fill="#999"/>
<rect x="322.7" y="836" width="1" height="1" fill="#999"/>
<rect x="330.2" y="836" width="1" height="1" fill="#999"/>
<rect x="337.8" y="836" width="1" height="1" fill="#999"/>
<rect x="345.3" y="836" width="1" height="1" fill="#999"/>
<rect x="360.4" y="836" width="1" height="1" fill="#999"/>
<rect x="368.0" y="836" width="1" height="1" fill="#999"/>
<rect x="375.5" y="836" width="1" height="1" fill="#999"/>
<rect x="383.1" y="836" width="1" height="1" fill="#999"/>
<rect x="390.6" y="836" width="1" height="1" fill="#999"/>
<rect x="398.2" y="836" width="1" height="1" fill="#999"/>
<rect x="405.7" y="836" width="1" height="1" fill="#999"/>
<rect x="413.3" y="836" width="1" height="1" fill="#999"/>
<rect x="420.8" y="836" width="1" height="1" fill="#999"/>
<rect x="435.9" y="836" width="1" height="1" fill="#999"/>
<rect x="443.5" y="836" width="1" height="1" fill="#999"/>
<rect x="451.0" y="836" width="1" height="1" fill="#999"/>
<rect x="458.6" y="836" width="1" height="1" fill="#999"/>
<rect x="466.1" y="836" width="1" height="1" fill="#999"/>
<rect x="473.7" y="836" width="1" height="1" fill="#999"/>
<rect x="481.2" y="836" width="1" height="1" fill="#999"/>
<rect x="488.8" y="836" width="1" height="1" fill="#999"/>
<rect x="496.3" y="836" width="1" height="1" fill="#999"/>
<rect x="511.4" y="836" width="1" height="1" fill="#999"/>
<rect x="519.0" y="836" width="1" height="1" fill="#999"/>
<rect x="526.5" y="836" width="1" height="1" fill="#999"/>
<rect x="534.1" y="836" width="1" height="1" fill="#999"/>
<rect x="541.6" y="836" width="1" height="1" fill="#999"/>
<rect x="549.2" y="836" width="1" height="1" fill="#999"/>
<rect x="556.8" y="836" width="1" height="1" fill="#999"/>
<rect x="564.3" y="836" width="1" height="1" fill="#999"/>
<rect x="571.8" y="836" width="1" height="1" fill="#999"/>
<rect x="586.9" y="836" width="1" height="1" fill="#999"/>
<rect x="594.5" y="836" width="1" height="1" fill="#999"/>
<rect x="602.0" y="836" width="1" height="1" fill="#999"/>
<rect x="609.6" y="836" width="1" height="1" fill="#999"/>
<rect x="617.1" y="836" width="1" height="1" fill="#999"/>
<rect x="624.7" y="836" width="1" height="1" fill="#999"/>
<rect x="632.2" y="836" width="1" height="1" fill="#999"/>
<rect x="639.8" y="836" width="1" height="1" fill="#999"/>
<rect x="647.3" y="836" width="1" height="1" fill="#999"/>
<rect x="662.4" y="836" width="1" height="1" fill="#999"/>
<rect x="670.0" y="836" width="1" height="1" fill="#999"/>
<rect x="677.5" y="836" width="1" height="1" fill="#999"/>
<rect x="685.1" y="836" width="1" height="1" fill="#999"/>
<rect x="692.6" y="836" width="1" height="1" fill="#999"/>
<rect x="700.2" y="836" width="1" height="1" fill="#999"/>
<rect x="707.8" y="836" width="1" height="1" fill="#999"/>
<rect x="715.3" y="836" width="1" height="1" fill="#999"/>
<rect x="722.8" y="836" width="1" height="1" fill="#999"/>
<rect x="737.9" y="836" width="1" height="1" fill="#999"/>
<rect x="745.5" y="836" width="1" height="1" fill="#999"/>
<rect x="753.0" y="836" width="1" height="1" fill="#999"/>
<rect x="760.6" y="836" width="1" height="1" fill="#999"/>
<rect x="768.1" y="836" width="1" height="1" fill="#999"/>
<rect x="775.7" y="836" width="1" height="1" fill="#999"/>
<rect x="783.2" y="836" width="1" height="1" fill="#999"/>
<rect x="790.8" y="836" width="1" height="1" fill="#999"/>
<rect x="798.3" y="836" width="1" height="1" fill="#999"/>
<rect x="813.4" y="836" width="1" height="1" fill="#999"/>
<rect x="821.0" y="836" width="1" height="1" fill="#999"/>
<rect x="828.5" y="836" width="1" height="1" fill="#999"/>
<rect x="836.1" y="836" width="1" height="1" fill="#999"/>
<rect x="843.6" y="836" width="1" height="1" fill="#999"/>
<rect x="851.2" y="836" width="1" height="1" fill="#999"/>
<rect x="858.8" y="836" width="1" height="1" fill="#999"/>
<rect x="866.3" y="836" width="1" height="1" fill="#999"/>
<rect x="873.8" y="836" width="1" height="1" fill="#999"/>
<rect x="888.9" y="836" width="1" height="1" fill="#999"/>
<rect x="896.5" y="836" width="1" height="1" fill="#999"/>
<rect x="904.0" y="836" width="1" height="1" fill="#999"/>
<rect x="911.6" y="836" width="1" height="1" fill="#999"/>
<rect x="919.1" y="836" width="1" height="1" fill="#999"/>
<rect x="926.7" y="836" width="1" height="1" fill="#999"/>
<rect x="934.2" y="836" width="1" height="1" fill="#999"/>
<rect x="941.8" y="836" width="1" height="1" fill="#999"/>
<rect x="949.3" y="836" width="1" height="1" fill="#999"/>
<rect x="964.4" y="836" width="1" height="1" fill="#999"/>
<rect x="972.0" y="836" width="1" height="1" fill="#999"/>
<rect x="979.5" y="836" width="1" height="1" fill="#999"/>
<rect x="987.1" y="836" width="1" height="1" fill="#999"/>
<rect x="994.6" y="836" width="1" height="1" fill="#999"/>
<rect x="1002.2" y="836" width="1" height="1" fill="#999"/>
<rect x="1009.8" y="836" width="1" height="1" fill="#999"/>
<rect x="1017.3" y="836" width="1" height="1" fill="#999"/>
<rect x="1024.8" y="836" width="1" height="1" fill="#999"/>
<rect x="1040.0" y="836" width="1" height="1" fill="#999"/>
<rect x="1047.5" y="836" width="1" height="1" fill="#999"/>
<rect x="1055.0" y="836" width="1" height="1" fill="#999"/>
<rect x="1062.6" y="836" width="1" height="1" fill="#999"/>
<rect x="1070.2" y="836" width="1" height="1" fill="#999"/>
<rect x="1077.7" y="836" width="1" height="1" fill="#999"/>
<rect x="1085.2" y="836" width="1" height="1" fill="#999"/>
<rect x="1092.8" y="836" width="1" height="1" fill="#999"/>
<rect x="1100.4" y="836" width="1" height="1" fill="#999"/>
<rect x="1115.5" y="836" width="1" height="1" fill="#999"/>
<rect x="1123.0" y="836" width="1" height="1" fill="#999"/>
<rect x="1130.5" y="836" width="1" height="1" fill="#999"/>
<rect x="1138.1" y="836" width="1" height="1" fill="#999"/>
<rect x="1145.7" y="836" width="1" height="1" fill="#999"/>
<rect x="1153.2" y="836" width="1" height="1" fill="#999"/>
<rect x="1160.8" y="836" width="1" height="1" fill="#999"/>
<rect x="1168.3" y="836" width="1" height="1" fill="#999"/>
<rect x="1175.9" y="836" width="1" height="1" fill="#999"/>
<rect x="50.9" y="817" width="1" height="21" fill="#5a5a5a"/>
<rect x="239.7" y="817" width="1" height="21" fill="#5a5a5a"/>
<rect x="617.1" y="817" width="1" height="21" fill="#5a5a5a"/>
<rect x="805.9" y="817" width="1" height="21" fill="#5a5a5a"/>
<rect x="994.6" y="817" width="1" height="21" fill="#5a5a5a"/>
<rect x="1183.4" y="817" width="1" height="21" fill="#5a5a5a"/>
<text x="51.4" y="827" font-size="11" fill="#c8c8c8" text-anchor="middle" font-family="Liberation Sans">0</text>
<text x="126.9" y="827" font-size="11" fill="#c8c8c8" text-anchor="middle" font-family="Liberation Sans">10</text>
<text x="202.4" y="827" font-size="11" fill="#c8c8c8" text-anchor="middle" font-family="Liberation Sans">20</text>
<text x="277.9" y="827" font-size="11" fill="#c8c8c8" text-anchor="middle" font-family="Liberation Sans">30</text>
<text x="353.4" y="827" font-size="11" fill="#c8c8c8" text-anchor="middle" font-family="Liberation Sans">40</text>
<text x="428.9" y="827" font-size="11" fill="#c8c8c8" text-anchor="middle" font-family="Liberation Sans">50</text>
<text x="504.4" y="827" font-size="11" fill="#c8c8c8" text-anchor="middle" font-family="Liberation Sans">50</text>
<text x="579.9" y="827" font-size="11" fill="#c8c8c8" text-anchor="middle" font-family="Liberation Sans">70</text>
<text x="655.4" y="827" font-size="11" fill="#c8c8c8" text-anchor="middle" font-family="Liberation Sans">80</text>
<text x="730.9" y="827" font-size="11" fill="#c8c8c8" text-anchor="middle" font-family="Liberation Sans">90</text>
<text x="806.4" y="827" font-size="11" fill="#c8c8c8" text-anchor="middle" font-family="Liberation Sans">100</text>
<text x="881.9" y="827" font-size="11" fill="#c8c8c8" text-anchor="middle" font-family="Liberation Sans">110</text>
<text x="957.4" y="827" font-size="11" fill="#c8c8c8" text-anchor="middle" font-family="Liberation Sans">120</text>
<text x="1032.9" y="827" font-size="11" fill="#c8c8c8" text-anchor="middle" font-family="Liberation Sans">130</text>
<text x="1108.4" y="827" font-size="11" fill="#c8c8c8" text-anchor="middle" font-family="Liberation Sans">140</text>
<text x="1183.9" y="827" font-size="11" fill="#c8c8c8" text-anchor="middle" font-family="Liberation Sans">150</text>
<rect x="477.2" y="816" width="9" height="17" fill="#48d48a"/><rect x="481.2" y="833" width="1" height="5" fill="#48d48a"/>
<text x="487.7" y="827" font-size="11" fill="#48d48a" font-family="Liberation Sans">57</text>
</svg>
<div class="fld" style="left:1197px;top:817px;width:66px;height:20px"></div><span class="t" style="left:1202px;top:820px;color:#d0d0d0;font-size:11.5px">57 F</span>
<svg class="a" style="left:1253px;top:821px" width="8" height="12"><path d="M1,5 L4,1 L7,5 Z M1,7 L4,11 L7,7 Z" fill="#777"/></svg>
<svg class="a" style="left:36px;top:847px" width="6" height="19"><rect width="6" height="19" fill="url(#hp)"/></svg>
<div class="fld" style="left:45px;top:846px;width:66px;height:20px"></div><span class="t" style="left:50px;top:849px;color:#d0d0d0;font-size:11.5px">0 F</span>
<svg class="a" style="left:101px;top:850px" width="8" height="12"><path d="M1,5 L4,1 L7,5 Z M1,7 L4,11 L7,7 Z" fill="#777"/></svg>
<div class="a" style="left:118px;top:847px;width:566px;height:19px;border-radius:4px;background:linear-gradient(#8c8c8c,#6a6a6a 60%,#5e5e5e);border:1px solid #3a3a3a"></div>
<svg class="a" style="left:120px;top:849px" width="14" height="15"><path d="M3,7.5 L11,3 L11,12 Z" fill="#d8d8d8"/></svg><span class="t" style="left:135px;top:849px;color:#3a3a3a;font-size:11.5px">0 F</span>
<span class="t" style="left:638px;top:849px;color:#3a3a3a;font-size:11.5px">150 F</span><svg class="a" style="left:668px;top:849px" width="14" height="15"><path d="M11,7.5 L3,3 L3,12 Z" fill="#d8d8d8"/></svg>
<div class="fld" style="left:689px;top:846px;width:66px;height:20px"></div><span class="t" style="left:694px;top:849px;color:#d0d0d0;font-size:11.5px">150 F</span>
<svg class="a" style="left:745px;top:850px" width="8" height="12"><path d="M1,5 L4,1 L7,5 Z M1,7 L4,11 L7,7 Z" fill="#777"/></svg>

<div class="grp" style="left:766px;top:842px;width:28px;height:28px"><svg class="a" style="left:0;top:0" width="26" height="26"><path d="M6,7 V19 M20,7 L13,13 L20,19 M15,7 L8,13 L15,19" fill="none" stroke="#151515" stroke-width="2.4"/></svg></div>
<div class="grp" style="left:804px;top:842px;width:139px;height:28px">
 <div class="bt" style="left:0;width:28px"></div><div class="bt" style="left:28px;width:27px"></div><div class="bt" style="left:55px;width:28px"></div><div class="bt" style="left:83px;width:27px"></div>
 <svg class="a" style="left:0;top:0" width="138" height="26">
  <path d="M20.07,9.10 A6.8,6.8 0 1 0 20.07,16.90" fill="none" stroke="#151515" stroke-width="4"/><path d="M15,10.5 H21.5 V14 H15 Z" fill="#151515"/>
  <path d="M35,13 L42,8 L42,18 Z" fill="#151515"/><path d="M46,7 Q42,13 46,19" fill="none" stroke="#151515" stroke-width="2"/>
  <path d="M62,6 L77,13 L62,20 Z" fill="#48d48a" stroke="#151515" stroke-width="1"/>
  <path d="M101,13 L94,8 L94,18 Z" fill="#151515"/><path d="M90,7 Q94,13 90,19" fill="none" stroke="#151515" stroke-width="2"/>
  <path d="M117.93,9.10 A6.8,6.8 0 1 1 117.93,16.90" fill="none" stroke="#151515" stroke-width="4"/><path d="M116.5,12 H123 V15.5 H116.5 Z" fill="#151515"/>
 </svg>
</div>
<div class="grp" style="left:954px;top:842px;width:28px;height:28px"><svg class="a" style="left:0;top:0" width="26" height="26"><path d="M20,7 V19 M6,7 L13,13 L6,19 M11,7 L18,13 L11,19" fill="none" stroke="#151515" stroke-width="2.4"/></svg></div>
<div class="grp" style="left:992px;top:842px;width:84px;height:28px">
 <div class="bt" style="left:0;width:28px"></div><div class="bt" style="left:28px;width:28px"></div>
 <svg class="a" style="left:0;top:0" width="83" height="26">
  <g stroke="#151515" stroke-width="1.5" fill="#e85a5a"><circle cx="13" cy="13.5" r="9"/><circle cx="41" cy="13.5" r="9"/><circle cx="69" cy="13.5" r="9"/></g>
  <path d="M12,15 L18.5,8.5" stroke="#151515" stroke-width="2.6"/><path d="M16,9 L18,11 M17.5,8 L19.5,10" stroke="#151515" stroke-width="1.2"/><circle cx="10.5" cy="16.5" r="2.6" fill="none" stroke="#151515" stroke-width="1.6"/>
  <path d="M38,8.5 Q34.5,13.5 38,18.5 M44,8.5 Q47.5,13.5 44,18.5" fill="none" stroke="#151515" stroke-width="2.4"/>
  <text x="69" y="18.5" font-family="Liberation Sans" font-weight="bold" font-size="14" fill="#151515" stroke="#151515" stroke-width="0.6" text-anchor="middle">?</text>
 </svg>
</div>
<div class="grp" style="left:1086px;top:842px;width:139px;height:28px">
 <div class="bt sel" style="left:0;width:110px;border:none"></div>
 <div class="a" style="left:27px;top:0;bottom:0;width:1px;background:#7f97bb"></div><div class="a" style="left:55px;top:0;bottom:0;width:1px;background:#7f97bb"></div><div class="a" style="left:82px;top:0;bottom:0;width:1px;background:#7f97bb"></div>
 <svg class="a" style="left:0;top:0" width="138" height="26">
  <g transform="translate(13.5,13) scale(0.85)"><path d="M0,-12 L4,-7 L1.5,-7 L1.5,-1.5 L7,-1.5 L7,-4 L12,0 L7,4 L7,1.5 L1.5,1.5 L1.5,7 L4,7 L0,12 L-4,7 L-1.5,7 L-1.5,1.5 L-7,1.5 L-7,4 L-12,0 L-7,-4 L-7,-1.5 L-1.5,-1.5 L-1.5,-7 L-4,-7 Z" fill="#f39a1f" stroke="#333" stroke-width="0.9"/></g>
  <rect x="33.5" y="5.5" width="15" height="15" rx="2" fill="#f39a1f" stroke="#333" stroke-width="0.8"/><path d="M34,13.5 H41 V20.5 M41,13.5 L48,6" fill="none" stroke="#5a3a10" stroke-width="0.8"/>
  <path d="M63.26,17.10 A7.2,7.2 0 0 1 73.10,7.26" fill="none" stroke="#f39a1f" stroke-width="2.6"/><path d="M76.48,9.21 L74.53,4.79 L71.67,9.74 Z" fill="#f39a1f"/><path d="M75.74,9.90 A7.2,7.2 0 0 1 65.90,19.74" fill="none" stroke="#f39a1f" stroke-width="2.6"/><path d="M62.52,17.79 L64.47,22.21 L67.33,17.26 Z" fill="#f39a1f"/>
  <circle cx="96" cy="13" r="10" fill="none" stroke="#e88a20" stroke-width="1.6"/><text x="96" y="18.5" font-family="Liberation Sans" font-weight="bold" font-size="15" fill="#151515" text-anchor="middle">P</text>
  <g fill="#f39a1f"><circle cx="116" cy="7" r="2.2"/><circle cx="123.5" cy="7" r="2.2"/><circle cx="116" cy="14" r="2.2"/><circle cx="123.5" cy="14" r="2.2"/></g><g fill="#151515"><circle cx="131" cy="7" r="2.2"/><circle cx="131" cy="14" r="2.2"/><circle cx="116" cy="21" r="2.2"/><circle cx="123.5" cy="21" r="2.2"/><circle cx="131" cy="21" r="2.2"/></g>
 </svg>
</div>
<div class="grp sel" style="left:1236px;top:842px;width:27px;height:28px"><svg class="a" style="left:0;top:0" width="25" height="26"><rect x="7" y="3" width="12" height="21" fill="#6a7a90"/><rect x="10" y="4" width="6" height="19" fill="#f0a050"/><path d="M7,3 H19 M7,10.5 H19 M7,17.5 H19" stroke="#151515" stroke-width="1"/><path d="M24,25 L24,21 L20,25 Z" fill="#111"/></svg></div>


<!-- ============ MATERIAL MANAGER ============ -->
<div class="a" style="left:36px;top:873px;width:925px;height:120px;border:1px solid #5e5e5e;border-right:1px solid #383838;border-bottom:1px solid #383838;background:#474747"></div>
<div class="a" style="left:37px;top:897px;width:923px;height:1px;background:#383838"></div>
<div class="a" style="left:37px;top:898px;width:923px;height:1px;background:#5e5e5e"></div>
<svg class="a" style="left:42px;top:879px" width="12" height="12"><rect width="12" height="12" fill="url(#hp)"/></svg>
<span class="t" style="left:63px;top:878px;">创建</span>
<span class="t" style="left:99px;top:878px;">编辑</span>
<span class="t" style="left:135px;top:878px;">功能</span>
<span class="t" style="left:171px;top:878px;">纹理</span>
<svg class="a" style="left:38px;top:900px" width="145" height="62">
 <defs><pattern id="str" width="9" height="9" patternUnits="userSpaceOnUse" patternTransform="rotate(45)"><rect width="9" height="9" fill="#7a7a7a"/><rect width="4.5" height="9" fill="#a2a2a2"/></pattern></defs>
 <rect x="0.5" y="0.5" width="44" height="60" fill="#666" stroke="#3a3a3a"/><rect x="1" y="1" width="43" height="44" fill="url(#str)"/>
 <circle cx="21" cy="23" r="19" fill="#9a9a9a" stroke="#111" stroke-width="0.9"/><circle cx="19" cy="21" r="16" fill="#b4b4b4"/><circle cx="16" cy="17" r="11" fill="#cdcdcd"/><circle cx="13" cy="14" r="8" fill="#e8e8e8"/><path d="M38,12 A19,19 0 0 1 24,41.5" fill="none" stroke="#111" stroke-width="0.9"/>
 <rect x="49.5" y="0.5" width="44" height="60" fill="#f6a81c" stroke="#f6a81c"/><rect x="50.5" y="1.5" width="42" height="43" fill="url(#str)"/>
 <circle cx="71.5" cy="23" r="19.5" fill="#f0f0f0"/>
 <rect x="98.5" y="0.5" width="44" height="60" fill="#666" stroke="#3a3a3a"/><rect x="99" y="1" width="43" height="44" fill="url(#str)"/>
 <circle cx="120.5" cy="23" r="19.5" fill="#76c6c6"/>
</svg>
<span class="t" style="left:40px;top:946px;color:#d8d8d8;letter-spacing:-1px">素描材质</span>
<span class="t" style="left:89px;top:946px;color:#151515">材质.1</span>
<span class="t" style="left:138px;top:946px;color:#d8d8d8">材质</span>
<svg class="a" style="left:0;top:900px" width="34" height="92">
 <g transform="translate(0,92) rotate(-90)" font-family="Liberation Sans">
  <text x="3.4" y="15.4" font-size="20" font-weight="bold" font-style="italic" fill="#9a9a9a" stroke="#9a9a9a" stroke-width="0.7" textLength="59" lengthAdjust="spacingAndGlyphs">MAXON</text>
  <text x="3.4" y="30.4" font-size="17" fill="#8e8e8e" textLength="81" lengthAdjust="spacingAndGlyphs">CINEMA 4D</text>
 </g>
</svg>
<!-- ============ COORDINATES ============ -->
<div class="a" style="left:964px;top:873px;width:300px;height:120px;border:1px solid #5e5e5e;border-right:1px solid #383838;border-bottom:1px solid #383838;background:#474747"></div>
<div class="a" style="left:965px;top:893px;width:297px;height:1px;background:#383838"></div>
<div class="a" style="left:965px;top:894px;width:297px;height:1px;background:#5e5e5e"></div>
<svg class="a" style="left:969px;top:878px" width="12" height="12"><rect width="12" height="12" fill="url(#hp)"/></svg>
<span class="t" style="left:988px;top:877px;">位置</span>
<span class="t" style="left:1081px;top:877px;">尺寸</span>
<span class="t" style="left:1174px;top:877px;">旋转</span>
<span class="t" style="left:968px;top:903px;color:#c8c8c8;font-size:11.5px">X</span><div class="fld" style="left:979px;top:900px;width:84px;height:20px"></div><span class="t" style="left:984px;top:903px;color:#d0d0d0;font-size:11.5px">0 cm</span><svg class="a" style="left:1053px;top:904px" width="8" height="12"><path d="M1,5 L4,1 L7,5 Z M1,7 L4,11 L7,7 Z" fill="#777"/></svg><span class="t" style="left:1066px;top:903px;color:#c8c8c8;font-size:11.5px">X</span><div class="fld" style="left:1077px;top:900px;width:84px;height:20px"></div><span class="t" style="left:1082px;top:903px;color:#d0d0d0;font-size:11.5px">20.478 cm</span><svg class="a" style="left:1151px;top:904px" width="8" height="12"><path d="M1,5 L4,1 L7,5 Z M1,7 L4,11 L7,7 Z" fill="#777"/></svg><span class="t" style="left:1165px;top:903px;color:#c8c8c8;font-size:11.5px">H</span><div class="fld" style="left:1177px;top:900px;width:82px;height:20px"></div><span class="t" style="left:1182px;top:903px;color:#d0d0d0;font-size:11.5px">0 °</span><svg class="a" style="left:1249px;top:904px" width="8" height="12"><path d="M1,5 L4,1 L7,5 Z M1,7 L4,11 L7,7 Z" fill="#777"/></svg><span class="t" style="left:968px;top:926px;color:#c8c8c8;font-size:11.5px">Y</span><div class="fld" style="left:979px;top:923px;width:84px;height:20px"></div><span class="t" style="left:984px;top:926px;color:#d0d0d0;font-size:11.5px">14.652 cm</span><svg class="a" style="left:1053px;top:927px" width="8" height="12"><path d="M1,5 L4,1 L7,5 Z M1,7 L4,11 L7,7 Z" fill="#777"/></svg><span class="t" style="left:1066px;top:926px;color:#c8c8c8;font-size:11.5px">Y</span><div class="fld" style="left:1077px;top:923px;width:84px;height:20px"></div><span class="t" style="left:1082px;top:926px;color:#d0d0d0;font-size:11.5px">20.478 cm</span><svg class="a" style="left:1151px;top:927px" width="8" height="12"><path d="M1,5 L4,1 L7,5 Z M1,7 L4,11 L7,7 Z" fill="#777"/></svg><span class="t" style="left:1165px;top:926px;color:#c8c8c8;font-size:11.5px">P</span><div class="fld" style="left:1177px;top:923px;width:82px;height:20px"></div><span class="t" style="left:1182px;top:926px;color:#d0d0d0;font-size:11.5px">0 °</span><svg class="a" style="left:1249px;top:927px" width="8" height="12"><path d="M1,5 L4,1 L7,5 Z M1,7 L4,11 L7,7 Z" fill="#777"/></svg><span class="t" style="left:968px;top:949px;color:#c8c8c8;font-size:11.5px">Z</span><div class="fld" style="left:979px;top:946px;width:84px;height:20px"></div><span class="t" style="left:984px;top:949px;color:#d0d0d0;font-size:11.5px">10.876 cm</span><svg class="a" style="left:1053px;top:950px" width="8" height="12"><path d="M1,5 L4,1 L7,5 Z M1,7 L4,11 L7,7 Z" fill="#777"/></svg><span class="t" style="left:1066px;top:949px;color:#c8c8c8;font-size:11.5px">Z</span><div class="fld" style="left:1077px;top:946px;width:84px;height:20px"></div><span class="t" style="left:1082px;top:949px;color:#d0d0d0;font-size:11.5px">2.149 cm</span><svg class="a" style="left:1151px;top:950px" width="8" height="12"><path d="M1,5 L4,1 L7,5 Z M1,7 L4,11 L7,7 Z" fill="#777"/></svg><span class="t" style="left:1165px;top:949px;color:#c8c8c8;font-size:11.5px">B</span><div class="fld" style="left:1177px;top:946px;width:82px;height:20px"></div><span class="t" style="left:1182px;top:949px;color:#d0d0d0;font-size:11.5px">0 °</span><svg class="a" style="left:1249px;top:950px" width="8" height="12"><path d="M1,5 L4,1 L7,5 Z M1,7 L4,11 L7,7 Z" fill="#777"/></svg>
<div class="dd" style="left:979px;top:972px;width:84px;height:19px"></div><span class="t" style="left:986px;top:974px;color:#d8d8d8">对象 (相对)</span>
<div class="dd" style="left:1077px;top:972px;width:84px;height:19px"></div><span class="t" style="left:1084px;top:974px;color:#d8d8d8">绝对尺寸</span>
<div class="pbtn" style="left:1177px;top:972px;width:82px;height:19px"></div><span class="t" style="left:1207px;top:974px;color:#d8d8d8">应用</span>

<!-- ============ RIGHT SIDE PANELS ============ -->

<!-- ============ OBJECT MANAGER ============ -->
<div class="a" style="left:1267px;top:26px;width:497px;height:200px;background:#474747;border-left:1px solid #606060;border-top:1px solid #606060"></div>
<div class="a" style="left:1264px;top:26px;width:3px;height:991px;background:#474747"></div>
<svg class="a" style="left:1273px;top:32px" width="12" height="12"><rect width="12" height="12" fill="url(#hp)"/></svg>
<span class="t" style="left:1294px;top:32px;">文件</span>
<span class="t" style="left:1330px;top:32px;">编辑</span>
<span class="t" style="left:1366px;top:32px;">查看</span>
<span class="t" style="left:1402px;top:32px;">对象</span>
<span class="t" style="left:1438px;top:32px;">标签</span>
<span class="t" style="left:1474px;top:32px;">书签</span>
<div class="a" style="left:1268px;top:50px;width:496px;height:1px;background:#333"></div>
<div class="a" style="left:1268px;top:51px;width:496px;height:1px;background:#5a5a5a"></div>
<div class="a" style="left:1268px;top:52px;width:496px;height:174px;background:#474747"></div>
<div class="a" style="left:1268px;top:53px;width:496px;height:20px;background:#545454"></div>
<div class="a" style="left:1268px;top:73px;width:496px;height:20px;background:#4c4c4c"></div>
<div class="a" style="left:1268px;top:93px;width:496px;height:20px;background:#545454"></div>
<div class="a" style="left:1268px;top:52px;width:1px;height:174px;background:#333"></div>
<div class="a" style="left:1342px;top:52px;width:1px;height:174px;background:#333"></div>
<div class="a" style="left:1381px;top:52px;width:1px;height:174px;background:#333"></div>
<svg class="a" style="left:1268px;top:52px" width="496" height="62" viewBox="1268 52 496 62">
 <g stroke="#c8c8c8" stroke-width="1" fill="none"><path d="M1276.5,53 V79 M1276.5,63.5 H1284 M1281,83.5 H1284 M1287.5,93 V103.5 H1295"/><rect x="1272.5" y="79.5" width="8" height="8"/><path d="M1274,83.5 H1279"/></g>
 <path d="M1288,59 Q1292.5,56 1297,59 V69 Q1292.5,72 1288,69 Z" fill="#7ec0f0" stroke="#3a6a9a" stroke-width="0.5"/><ellipse cx="1292.5" cy="59" rx="4.5" ry="1.6" fill="#b8e0ff"/>
 <path d="M1293,79 L1299,88 L1287,88 Z" fill="#7ec0f0"/><g fill="#fff"><circle cx="1293" cy="78" r="1.6"/><circle cx="1287" cy="88.5" r="1.6"/><circle cx="1299" cy="88.5" r="1.6"/></g>
 <path d="M1298,100 L1304,97 L1310,100 L1310,107 L1304,110 L1298,107 Z" fill="#5a9fdc" stroke="#2a5a8a" stroke-width="0.5"/><path d="M1298,100 L1304,103 L1310,100 L1304,97 Z" fill="#a8d8ff"/><path d="M1304,103 V110" stroke="#2a5a8a" stroke-width="0.4"/>
 <g fill="#777"><rect x="1346" y="57" width="12" height="12" rx="2"/><rect x="1346" y="77" width="12" height="12" rx="2"/><rect x="1346" y="97" width="12" height="12" rx="2"/></g>
 <g stroke="#3c3c3c" stroke-width="1.5"><path d="M1346.5,68.5 L1357.5,57.5 M1346.5,88.5 L1357.5,77.5 M1346.5,108.5 L1357.5,97.5"/></g>
 <g fill="#727272"><path d="M1365.5,57 L1368,59.5 L1365.5,62 L1363,59.5 Z M1365.5,65 L1368,67.5 L1365.5,70 L1363,67.5 Z M1365.5,77 L1368,79.5 L1365.5,82 L1363,79.5 Z M1365.5,85 L1368,87.5 L1365.5,90 L1363,87.5 Z M1365.5,97 L1368,99.5 L1365.5,102 L1363,99.5 Z M1365.5,105 L1368,107.5 L1365.5,110 L1363,107.5 Z"/></g>
 <path d="M1370.5,64.5 L1373,67 L1380,59" fill="none" stroke="#3ad27a" stroke-width="1.3"/>
 <path d="M1372,100 L1379,107 M1379,100 L1372,107" stroke="#e84848" stroke-width="1.8"/>
 <defs><radialGradient id="ball" cx="0.4" cy="0.35" r="0.65"><stop offset="0" stop-color="#f0a050"/><stop offset="0.7" stop-color="#c07020"/><stop offset="1" stop-color="#6a3a10"/></radialGradient></defs>
 <g fill="url(#ball)" stroke="#3a2000" stroke-width="0.4"><circle cx="1388.5" cy="58" r="3.3"/><circle cx="1395.5" cy="65" r="3.3"/><circle cx="1388.5" cy="78" r="3.3"/><circle cx="1395.5" cy="85" r="3.3"/><circle cx="1388.5" cy="98" r="3.3"/><circle cx="1395.5" cy="105" r="3.3"/></g>
 <defs><pattern id="str2" width="5" height="5" patternUnits="userSpaceOnUse" patternTransform="rotate(45)"><rect width="5" height="5" fill="#6a6a6a"/><rect width="2.5" height="5" fill="#8a8a8a"/></pattern></defs>
 <rect x="1403" y="53.5" width="18" height="18" fill="url(#str2)" stroke="#f6a81c" stroke-width="1.2"/><circle cx="1412" cy="62.5" r="7.5" fill="#f0f0f0"/>
 <rect x="1405" y="75" width="14" height="14" fill="#2a2a2a" stroke="#c87a2a" stroke-width="1"/><g fill="#fff"><rect x="1406" y="76" width="4" height="4"/><rect x="1414" y="76" width="4" height="4"/><rect x="1410" y="80" width="4" height="4"/><rect x="1406" y="84" width="4" height="4"/><rect x="1414" y="84" width="4" height="4"/></g>
 <rect x="1423" y="73" width="18" height="18" fill="url(#str2)"/><circle cx="1432" cy="82" r="7.5" fill="#f0f0f0"/>
 <rect x="1443" y="73" width="18" height="18" fill="url(#str2)"/><circle cx="1452" cy="82" r="7.5" fill="#76c6c6"/>
 <path d="M1472,76 L1479,88 L1465,88 Z" fill="#e85a28"/>
 <rect x="1403" y="93" width="18" height="18" fill="url(#str2)"/><circle cx="1412" cy="102" r="7.5" fill="#76c6c6"/>
</svg>
<span class="t" style="left:1304px;top:56px;color:#f6a81c">圆柱</span>
<span class="t" style="left:1304px;top:76px;color:#d0d0d0">手机</span>
<span class="t" style="left:1315px;top:96px;color:#d0d0d0">屏幕</span>



<!-- ============ RENDER SETTINGS DIALOG ============ -->
<div class="a" style="left:977px;top:224px;width:800px;height:550px;border:1px solid #5a5a5a;border-radius:7px;background:#fff"></div>
<div class="a" style="left:1262px;top:225px;width:502px;height:28px;background:linear-gradient(90deg,#b8d4ee 0,#5a6a7a 4px,#4a5663 20px,#4b5560 55%,#4e5863 75%,#5e6872 85%,#6a747e 100%)"></div>
<div class="a" style="left:1262px;top:766px;width:502px;height:7px;background:linear-gradient(90deg,#c0d8f0 0,#5a6a7a 6px,#3f4a55 30px,#6f7d8a 50px,#3a4550 90px,#4a5560 100%)"></div>
<div class="a" style="left:1262px;top:225px;width:502px;height:1px;background:#8a98a6"></div><div class="a" style="left:1266px;top:252px;width:498px;height:1px;background:#7f8c98"></div>
<div class="a" style="left:1716px;top:225px;width:48px;height:20px;border:1px solid #9aa4ae;border-top:none;border-radius:0 0 0 5px;background:linear-gradient(120deg,#56616c,#68727c)"></div>
<div class="a" style="left:1745px;top:225px;width:1px;height:19px;background:#9aa4ae"></div>
<div class="a" style="left:1726px;top:234px;width:11px;height:4px;background:#f4f4f4;border:1px solid #3a3a3a;border-radius:1px"></div>
<div class="a" style="left:1754px;top:229px;width:12px;height:10px;border:2.5px solid #f0f0f0;background:#4a5663;outline:1px solid #3a3a3a"></div>
<div class="a" style="left:1262px;top:224px;width:502px;height:1px;background:#2e2e2e"></div>
<svg class="a" style="left:985px;top:231px" width="17" height="17"><defs><radialGradient id="c4d" cx="0.4" cy="0.4" r="0.6"><stop offset="0" stop-color="#6a8ae8"/><stop offset="0.6" stop-color="#2a3aa0"/><stop offset="1" stop-color="#101848"/></radialGradient></defs><circle cx="8.5" cy="8.5" r="7.5" fill="url(#c4d)" stroke="#bbb" stroke-width="1"/><ellipse cx="10" cy="6" rx="3" ry="2" fill="#c0d0ff" opacity=".6"/></svg>
<span class="t" style="left:1006px;top:232px;color:#000;font-size:12px">渲染设置</span>
<div class="a" style="left:984px;top:253px;width:780px;height:513px;background:#474747;border-top:1px solid #333"></div>
<svg class="a" style="left:990px;top:257px" width="12" height="12"><rect width="12" height="12" fill="url(#hp)"/></svg>
<div class="a" style="left:984px;top:272px;width:780px;height:1px;background:#333"></div>
<div class="a" style="left:984px;top:273px;width:780px;height:1px;background:#575757"></div>
<div class="a" style="left:1138px;top:274px;width:1px;height:492px;background:#333"></div>
<div class="a" style="left:1139px;top:274px;width:1px;height:492px;background:#575757"></div>
<span class="t" style="left:1005px;top:280px;color:#c8c8c8">渲染器</span>
<div class="dd" style="left:1043px;top:278px;width:78px;height:19px"></div><span class="t" style="left:1050px;top:279px;color:#d8d8d8">标准</span>

<div class="a" style="left:985px;top:306px;width:150px;height:20px;background:#4f4f4f"></div>
<span class="t" style="left:1027px;top:309px;color:#c8c8c8">输出</span>
<div class="a" style="left:985px;top:326px;width:150px;height:20px;background:#474747"></div>
<span class="t" style="left:1027px;top:329px;color:#c8c8c8">保存</span>
<div class="a" style="left:985px;top:346px;width:150px;height:20px;background:#4f4f4f"></div>
<span class="t" style="left:1027px;top:349px;color:#c8c8c8">多通道</span>
<div class="a" style="left:985px;top:366px;width:150px;height:20px;background:#474747"></div>
<span class="t" style="left:1027px;top:369px;color:#c8c8c8">抗锯齿</span>
<div class="a" style="left:985px;top:386px;width:150px;height:20px;background:#4f4f4f"></div>
<span class="t" style="left:1027px;top:389px;color:#c8c8c8">选项</span>
<div class="a" style="left:985px;top:406px;width:150px;height:20px;background:#474747"></div>
<span class="t" style="left:1027px;top:409px;color:#c8c8c8">立体</span>
<div class="a" style="left:985px;top:426px;width:150px;height:20px;background:#4f4f4f"></div>
<span class="t" style="left:1027px;top:429px;color:#c8c8c8;font-size:11.5px">Team Render</span>
<div class="a" style="left:985px;top:446px;width:150px;height:20px;background:#474747"></div>
<span class="t" style="left:1027px;top:449px;color:#f6a81c">素描卡通</span>
<svg class="a" style="left:985px;top:306px" width="150" height="160" viewBox="985 306 150 160"><g stroke="#9a9a9a" stroke-width="1" fill="none"><path d="M1018.5,306 V456.5 M1018.5,316.5 H1026 M1018.5,336.5 H1026 M1018.5,356.5 H1026 M1018.5,376.5 H1026 M1018.5,396.5 H1026 M1018.5,416.5 H1026 M1018.5,436.5 H1026 M1018.5,456.5 H1026"/></g><rect x="1015" y="352" width="8" height="9" fill="#4f4f4f"/><path d="M1016.5,352.5 L1020.5,356.5 L1016.5,360.5 Z" fill="#151515"/></svg>
<div class="cbk" style="left:989px;top:329px"></div>
<div class="cbk" style="left:989px;top:349px"></div>
<div class="cbk" style="left:989px;top:449px"></div>
<div class="cb" style="left:989px;top:409px"></div>

<div class="pbtn" style="left:986px;top:581px;width:57px;height:19px"></div><span class="t" style="left:997px;top:583px;color:#d0d0d0">效果...</span>
<div class="pbtn" style="left:1048px;top:581px;width:87px;height:19px"></div><span class="t" style="left:1059px;top:583px;color:#d0d0d0">多通道渲染...</span>
<div class="a" style="left:985px;top:603px;width:150px;height:1px;background:#333"></div>
<div class="a" style="left:985px;top:608px;width:150px;height:20px;background:#4f4f4f"></div>
<svg class="a" style="left:989px;top:612px" width="10" height="10"><path d="M1,3 V1 H3 M7,1 H9 V3 M9,7 V9 H7 M3,9 H1 V7" fill="none" stroke="#ddd" stroke-width="1.3"/><circle cx="5" cy="5" r="1.5" fill="#ddd"/></svg>
<svg class="a" style="left:1010px;top:608px" width="10" height="14"><path d="M1,0 V9.5 H9" fill="none" stroke="#9a9a9a"/></svg>
<span class="t" style="left:1019px;top:611px;color:#f6a81c">我的渲染设置</span>
<div class="pbtn" style="left:986px;top:747px;width:149px;height:19px"></div><span class="t" style="left:1033px;top:749px;color:#d0d0d0">渲染设置...</span>

<div class="a" style="left:1140px;top:274px;width:624px;height:492px;background:#474747"></div>
<div class="a" style="left:1143px;top:302px;width:621px;height:464px;background:#505050"></div>
<div class="a" style="left:1143px;top:280px;width:621px;height:18px;background:#333"></div>
<span class="t" style="left:1145px;top:282px;color:#c8c8c8">素描卡通</span>
<div class="grp" style="left:1145px;top:304px;width:247px;height:21px;background:#656565;border-color:#2e2e2e;border-radius:5px">
 <div class="a sel" style="left:41px;top:0;width:40px;height:19px"></div>
 <div class="a" style="left:40px;top:0;width:1px;height:19px;background:#444"></div><div class="a" style="left:81px;top:0;width:1px;height:19px;background:#444"></div><div class="a" style="left:122px;top:0;width:1px;height:19px;background:#444"></div><div class="a" style="left:163px;top:0;width:1px;height:19px;background:#444"></div><div class="a" style="left:204px;top:0;width:1px;height:19px;background:#444"></div>
</div>
<span class="t" style="left:1154px;top:307px;color:#d8d8d8">主体</span>
<span class="t" style="left:1195px;top:307px;color:#111">线条</span>
<span class="t" style="left:1236px;top:307px;color:#d8d8d8">渲染</span>
<span class="t" style="left:1271px;top:307px;color:#d8d8d8">多通道</span>
<span class="t" style="left:1318px;top:307px;color:#d8d8d8">着色</span>
<span class="t" style="left:1359px;top:307px;color:#d8d8d8">显示</span>
<div class="a" style="left:1151px;top:329px;width:613px;height:18px;background:#333"></div>
<span class="t" style="left:1153px;top:331px;color:#c8c8c8">线条</span>

<div class="a" style="left:1151px;top:351px;width:613px;height:18px;background:#6b6b6b"></div><svg class="a" style="left:1161px;top:358px" width="8" height="5"><path d="M0,0 H7 L3.5,4 Z" fill="#e0e0e0"/></svg><span class="t" style="left:1170px;top:353px;color:#e0e0e0">类型</span>
<div class="radio" style="left:1161px;top:375px"></div>
<span class="t" style="left:1179px;top:375px;color:#c8c8c8">轮廓 .</span>
<div class="cbk" style="left:1216px;top:375px"></div>
<div class="radio" style="left:1161px;top:396px"></div>
<span class="t" style="left:1179px;top:396px;color:#c8c8c8">重叠 .</span>
<div class="cb" style="left:1216px;top:396px"></div>
<div class="radio" style="left:1161px;top:417px"></div>
<span class="t" style="left:1179px;top:417px;color:#c8c8c8">角度 .</span>
<div class="cbk" style="left:1216px;top:417px"></div>
<div class="radio" style="left:1161px;top:438px"></div>
<span class="t" style="left:1179px;top:438px;color:#c8c8c8">材质 .</span>
<div class="cbk" style="left:1216px;top:438px"></div>
<div class="radio" style="left:1161px;top:459px"></div>
<span class="t" style="left:1179px;top:459px;color:#c8c8c8">交叉 .</span>
<div class="cb" style="left:1216px;top:459px"></div>
<div class="radio" style="left:1161px;top:480px"></div>
<span class="t" style="left:1179px;top:480px;color:#c8c8c8">运动 .</span>
<div class="cb" style="left:1216px;top:480px"></div>
<div class="radio" style="left:1161px;top:501px"></div>
<span class="t" style="left:1179px;top:501px;color:#c8c8c8">等参线</span>
<div class="cb" style="left:1216px;top:501px"></div>
<div class="radio" style="left:1161px;top:522px"></div>
<span class="t" style="left:1179px;top:522px;color:#c8c8c8">粒子 .</span>
<div class="cb" style="left:1216px;top:522px"></div>
<div class="radio" style="left:1247px;top:375px"></div>
<span class="t" style="left:1265px;top:375px;color:#c8c8c8">折叠 . . .</span>
<div class="cb" style="left:1314px;top:375px"></div>
<div class="radio" style="left:1247px;top:396px"></div>
<span class="t" style="left:1265px;top:396px;color:#c8c8c8">褶皱 . . .</span>
<div class="cbk" style="left:1314px;top:396px"></div>
<div class="radio" style="left:1247px;top:417px"></div>
<span class="t" style="left:1265px;top:417px;color:#c8c8c8">边沿 . . .</span>
<div class="cb" style="left:1314px;top:417px"></div>
<div class="radio" style="left:1247px;top:438px"></div>
<span class="t" style="left:1265px;top:438px;color:#c8c8c8">边缘 . . .</span>
<div class="cb" style="left:1314px;top:438px"></div>
<div class="radio" style="left:1247px;top:459px"></div>
<span class="t" style="left:1265px;top:459px;color:#c8c8c8">三角分布</span>
<div class="cb" style="left:1314px;top:459px"></div>
<div class="radio" style="left:1247px;top:480px"></div>
<span class="t" style="left:1265px;top:480px;color:#c8c8c8">等高线. .</span>
<div class="cb" style="left:1314px;top:480px"></div>
<div class="radio" style="left:1247px;top:501px"></div>
<span class="t" style="left:1265px;top:501px;color:#c8c8c8">样条 . . .</span>
<div class="cb" style="left:1314px;top:501px"></div>
<div class="radio" style="left:1161px;top:543px"></div><span class="t" style="left:1179px;top:543px;color:#c8c8c8">结合 . . . . .</span>
<div class="dd" style="left:1239px;top:541px;width:224px;height:19px"></div><span class="t" style="left:1246px;top:543px;color:#d8d8d8">全部</span>
<div class="radio" style="left:1161px;top:571px"></div><span class="t" style="left:1179px;top:571px;color:#c8c8c8">隐藏挑选. .</span>
<div class="dd" style="left:1239px;top:569px;width:224px;height:19px"></div><span class="t" style="left:1246px;top:571px;color:#d8d8d8">本体</span>
<div class="a" style="left:1467px;top:573px;width:10px;height:10px;border-radius:50%;border:1.5px solid #3e3e3e;background:#555"></div><span class="t" style="left:1483px;top:571px;color:#8a8a8a">本体挑选</span><div class="cbk dim" style="left:1533px;top:571px;background:#444;border-color:#3a3a3a"></div>
<div class="radio" style="left:1161px;top:593px"></div><svg class="a" style="left:1182px;top:596px" width="5" height="8"><path d="M0,0 L4,4 L0,8 Z" fill="#151515"/></svg><span class="t" style="left:1190px;top:593px;color:#c8c8c8">默认可见</span>
<div class="a" style="left:1239px;top:590px;width:515px;height:20px;background:#333;border-bottom:1px solid #5a5a5a"></div><span class="t" style="left:1246px;top:593px;color:#c8c8c8">素描材质</span>
<svg class="a" style="left:1735px;top:591px" width="18" height="18"><rect width="18" height="18" fill="url(#str2)"/><circle cx="9.5" cy="9.5" r="7.8" fill="#a8a8a8" stroke="#222" stroke-width="0.7"/><circle cx="8.5" cy="8" r="6" fill="#c4c4c4"/><circle cx="7" cy="6.5" r="3.6" fill="#ececec"/></svg>
<div class="a" style="left:1755px;top:589px;width:12px;height:21px;background:linear-gradient(#707070,#585858);border:1px solid #333;border-radius:2px"></div><svg class="a" style="left:1759px;top:595px" width="5" height="8"><path d="M0,0 L4,4 L0,8 Z" fill="#ddd"/></svg><div class="a" style="left:1755px;top:612px;width:12px;height:21px;background:linear-gradient(#707070,#585858);border:1px solid #333;border-radius:2px"></div><svg class="a" style="left:1759px;top:618px" width="5" height="8"><path d="M0,0 L4,4 L0,8 Z" fill="#ddd"/></svg>
<div class="radio" style="left:1161px;top:615px"></div><span class="t" style="left:1179px;top:615px;color:#c8c8c8">默认隐藏. .</span>
<div class="a" style="left:1239px;top:613px;width:515px;height:20px;background:#333;border-bottom:1px solid #5a5a5a"></div>
<div class="radio" style="left:1161px;top:638px"></div><span class="t" style="left:1179px;top:638px;color:#c8c8c8">线条材质. .</span>
<div class="dd" style="left:1239px;top:636px;width:224px;height:19px"></div><span class="t" style="left:1246px;top:637px;color:#d8d8d8">默认</span>
<div class="a" style="left:1151px;top:662px;width:613px;height:18px;background:#6b6b6b"></div><svg class="a" style="left:1161px;top:669px" width="8" height="5"><path d="M0,0 H7 L3.5,4 Z" fill="#e0e0e0"/></svg><span class="t" style="left:1170px;top:664px;color:#e0e0e0">轮廓</span>
<div class="radio" style="left:1161px;top:686px"></div><span class="t" style="left:1179px;top:686px;color:#c8c8c8">轮廓挑选</span>
<div class="dd" style="left:1228px;top:683px;width:54px;height:19px"></div><span class="t" style="left:1235px;top:685px;color:#d8d8d8">本体</span>
<div class="a" style="left:1287px;top:688px;width:10px;height:10px;border-radius:50%;border:1.5px solid #3e3e3e;background:#555"></div><span class="t" style="left:1303px;top:686px;color:#8a8a8a">本体挑选</span><div class="cbk dim" style="left:1352px;top:686px;background:#444;border-color:#3a3a3a"></div>
<div class="a" style="left:1151px;top:710px;width:613px;height:18px;background:#6b6b6b"></div><svg class="a" style="left:1161px;top:717px" width="8" height="5"><path d="M0,0 H7 L3.5,4 Z" fill="#e0e0e0"/></svg><span class="t" style="left:1170px;top:712px;color:#e0e0e0">褶皱</span>
<div class="radio" style="left:1161px;top:735px"></div><span class="t" style="left:1179px;top:735px;color:#c8c8c8">最小</span>
<div class="fld" style="left:1207px;top:733px;width:65px;height:19px"></div><span class="t" style="left:1211px;top:735px;color:#d0d0d0;font-size:11.5px">10 °</span><svg class="a" style="left:1263px;top:737px" width="8" height="12"><path d="M1,5 L4,1 L7,5 Z M1,7 L4,11 L7,7 Z" fill="#777"/></svg>
<div class="a" style="left:1272px;top:735px;width:492px;height:14px;background:#333"></div><div class="a" style="left:1272px;top:735px;width:30px;height:14px;background:#7a7a7a"></div><div class="a" style="left:1301px;top:735px;width:2px;height:14px;background:#f6a81c"></div><div class="a" style="left:1530px;top:744px;width:1px;height:4px;background:#a06a10"></div>
<div class="a" style="left:1151px;top:760px;width:613px;height:6px;background:#6b6b6b"></div>
<!-- ============ ATTRIBUTE MANAGER ============ -->

<div class="a" style="left:1267px;top:773px;width:497px;height:243px;background:#474747;border-left:1px solid #606060"></div>
<div class="radio" style="left:1272px;top:781px"></div><span class="t" style="left:1290px;top:781px;color:#c8c8c8">颜色</span><div class="cb" style="left:1317px;top:781px"></div>
<div class="radio" style="left:1347px;top:781px"></div><span class="t" style="left:1365px;top:781px;color:#c8c8c8">漫射</span><div class="cb" style="left:1401px;top:781px"></div>
<div class="radio" style="left:1272px;top:802px"></div><span class="t" style="left:1290px;top:802px;color:#c8c8c8">发光</span><div class="cbk" style="left:1317px;top:802px"></div>
<div class="radio" style="left:1347px;top:802px"></div><span class="t" style="left:1365px;top:802px;color:#c8c8c8">透明</span><div class="cb" style="left:1401px;top:802px"></div>
<div class="radio" style="left:1272px;top:823px"></div><span class="t" style="left:1290px;top:823px;color:#c8c8c8">反射</span><div class="cb" style="left:1317px;top:823px"></div>
<div class="radio" style="left:1347px;top:823px"></div><span class="t" style="left:1365px;top:823px;color:#c8c8c8">环境</span><div class="cb" style="left:1401px;top:823px"></div>
<div class="radio" style="left:1272px;top:844px"></div><span class="t" style="left:1290px;top:844px;color:#c8c8c8">烟雾</span><div class="cb" style="left:1317px;top:844px"></div>
<div class="radio" style="left:1347px;top:844px"></div><span class="t" style="left:1365px;top:844px;color:#c8c8c8">凹凸</span><div class="cb" style="left:1401px;top:844px"></div>
<div class="radio" style="left:1272px;top:865px"></div><span class="t" style="left:1290px;top:865px;color:#c8c8c8">法线</span><div class="cb" style="left:1317px;top:865px"></div>
<div class="radio" style="left:1347px;top:865px"></div><span class="t" style="left:1365px;top:865px;color:#c8c8c8;font-size:11.5px">Alpha</span><div class="cb" style="left:1401px;top:865px"></div>
<div class="radio" style="left:1272px;top:886px"></div><span class="t" style="left:1290px;top:886px;color:#c8c8c8">辉光</span><div class="cb" style="left:1317px;top:886px"></div>
<div class="radio" style="left:1347px;top:886px"></div><span class="t" style="left:1365px;top:886px;color:#c8c8c8">置换</span><div class="cb" style="left:1401px;top:886px"></div>
<div class="pbtn" style="left:1283px;top:905px;width:99px;height:18px"></div><span class="t" style="left:1292px;top:906px;color:#d0d0d0">添加自定义通道</span>
<svg class="a" style="left:1740px;top:908px" width="24" height="44"><circle cx="22" cy="22" r="21" fill="#2e3440" stroke="#1a1e24"/><path d="M7,22 H24" stroke="#444a55"/><path d="M22,8 V15 M19,11 L22,8 L25,11" fill="none" stroke="#3aa0f0" stroke-width="1.5"/><path d="M22,28 V35 M19,32 L22,35 L25,32" fill="none" stroke="#30c040" stroke-width="1.5"/></svg>
<svg class="a" style="left:1195px;top:68px" width="68" height="18" viewBox="0 0 68 18"><polygon points="8.80,2.40 11.00,5.00 8.80,7.08 6.60,5.00" fill="#151515"/><polygon points="8.80,16.40 6.60,13.80 8.80,11.72 11.00,13.80" fill="#151515"/><polygon points="1.80,9.40 4.40,7.20 6.48,9.40 4.40,11.60" fill="#151515"/><polygon points="15.80,9.40 13.20,11.60 11.12,9.40 13.20,7.20" fill="#151515"/><path d="M25.4,2 L29,6 L21.8,6 Z M24.7,5.5 H26.1 V11 H24.7 Z M19.2,10.6 L31.6,10.6 L25.4,17 Z" fill="#151515"/><path d="M39.98,14.66 A5.6,5.6 0 0 1 39.98,4.14" fill="none" stroke="#151515" stroke-width="1.5"/><path d="M43.82,4.14 A5.6,5.6 0 0 1 43.82,14.66" fill="none" stroke="#151515" stroke-width="1.5"/><path d="M43.5,2.4 L47.5,3.2 L45,6.5 Z M40.3,16.4 L36.3,15.6 L38.8,12.3 Z" fill="#151515"/><circle cx="41.9" cy="9.4" r="1.2" fill="#151515"/><rect x="53.6" y="3.4" width="12" height="13" rx="1.6" fill="none" stroke="#151515" stroke-width="1.3"/><rect x="53" y="2.8" width="13.2" height="2.6" rx="1" fill="#151515"/><path d="M54,9.8 H59.5 V16.3" fill="none" stroke="#151515" stroke-width="1.1"/></svg>
<div class="a" style="left:0;top:1016px;width:1764px;height:4px;background:#1e3058;border-top:1px solid #151a24"></div><div class="a" style="left:0;top:1017px;width:1764px;height:1px;background:#7e90aa"></div><div class="a" style="left:466px;top:1017px;width:582px;height:3px;background:linear-gradient(90deg,#3a5070,#8aa0b8 20%,#90a8c0 80%,#6a8aa8)"></div><div class="a" style="left:119px;top:1017px;width:53px;height:3px;background:#c4c8d0;border-radius:2px 2px 0 0"></div><div class="a" style="left:181px;top:1017px;width:58px;height:3px;background:#c4c8d0;border-radius:2px 2px 0 0"></div><div class="a" style="left:305px;top:1017px;width:57px;height:3px;background:#c4c8d0;border-radius:2px 2px 0 0"></div><div class="a" style="left:738px;top:1017px;width:58px;height:3px;background:#c4c8d0;border-radius:2px 2px 0 0"></div><div class="a" style="left:801px;top:1017px;width:57px;height:3px;background:#c4c8d0;border-radius:2px 2px 0 0"></div><div class="a" style="left:925px;top:1017px;width:57px;height:3px;background:#c4c8d0;border-radius:2px 2px 0 0"></div><div class="a" style="left:1049px;top:1017px;width:49px;height:3px;background:#c4c8d0;border-radius:2px 2px 0 0"></div><div class="a" style="left:1111px;top:1017px;width:49px;height:3px;background:#c4c8d0;border-radius:2px 2px 0 0"></div><div class="a" style="left:1173px;top:1017px;width:58px;height:3px;background:#c4c8d0;border-radius:2px 2px 0 0"></div><div class="a" style="left:1234px;top:1017px;width:58px;height:3px;background:#c4c8d0;border-radius:2px 2px 0 0"></div><div class="a" style="left:1297px;top:1017px;width:57px;height:3px;background:#c4c8d0;border-radius:2px 2px 0 0"></div><div class="a" style="left:12px;top:1017px;width:23px;height:3px;background:#5a8ac0;border-radius:50% 50% 0 0"></div>
<!-- ============ STATUS ============ -->
<div class="a" style="left:0;top:996px;width:1264px;height:20px;background:#474747;border-top:1px solid #5e5e5e"></div>
<svg class="a" style="left:3px;top:1000px" width="12" height="12"><rect width="12" height="12" fill="url(#hp)"/></svg>
<span class="t" style="left:23px;top:999px;color:#c8c8c8;;font-size:11.5px">00:00:00</span>
<div class="a" style="left:76px;top:997px;width:1px;height:17px;background:#333"></div>
<span class="t" style="left:80px;top:999px;color:#c8c8c8;font-size:10.8px">移动：点击并拖动鼠标移动元素。按住 SHIFT 键量化移动；节点编辑模式时按住 SHIFT 键增加选择对象；按住 CTRL 键减少选择对象。</span>


<svg class="a" style="left:860px;top:993px" width="44" height="23" viewBox="860 993 44 23">
 <path d="M871.4,994 L880.8,999.5 L880.8,1009.5 L871.4,1014.8 L862,1009.5 L862,999.5 Z" fill="#7c7c7c"/>
 <path d="M866,999 V1006 A3.6,3.6 0 0 0 873.2,1006 V999" fill="none" stroke="#484848" stroke-width="2"/><path d="M877,999 V1008.5" stroke="#484848" stroke-width="2"/>
 <circle cx="884.5" cy="1004.5" r="0.8" fill="#7a7a7a"/>
 <path d="M891,1001.5 H888.5 A1.5,1.5 0 0 0 887,1003 V1006.5 A1.5,1.5 0 0 0 888.5,1008 H891 M893,1008 V1003 A1.5,1.5 0 0 1 894.5,1001.5 H896.5 A1.5,1.5 0 0 1 898,1003 V1008" fill="none" stroke="#7a7a7a" stroke-width="1.2"/>
</svg>
</body></html>
